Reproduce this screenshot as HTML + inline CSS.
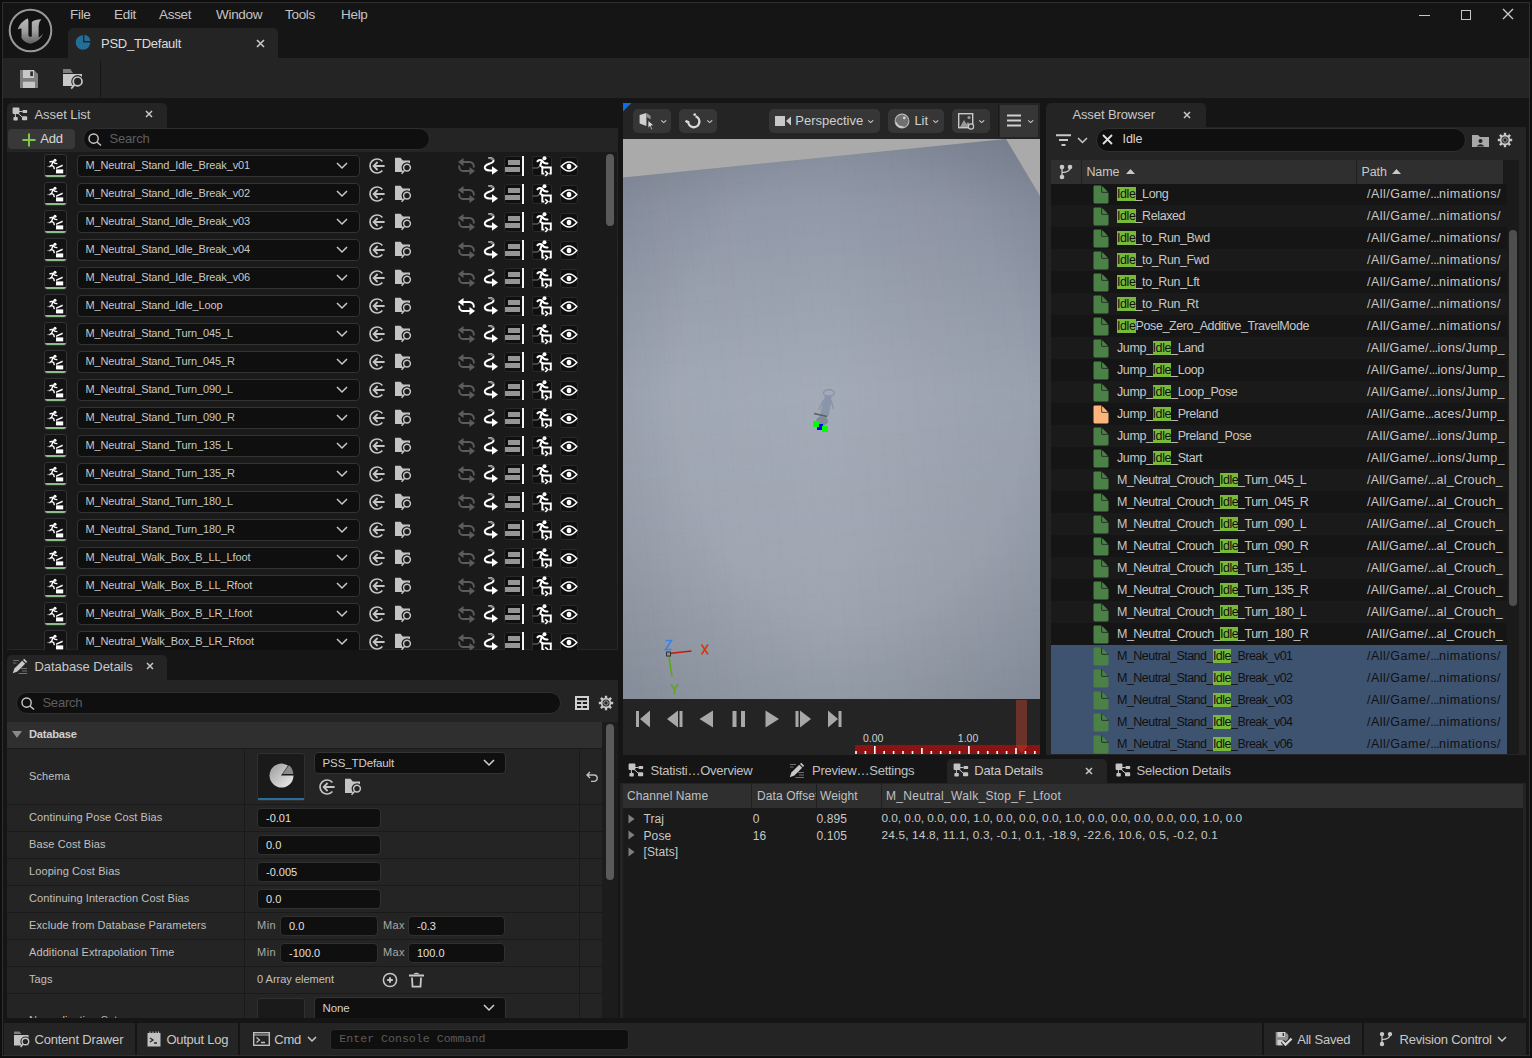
<!DOCTYPE html>
<html><head><meta charset="utf-8"><style>
*{box-sizing:border-box;margin:0;padding:0}
html,body{width:1532px;height:1058px;overflow:hidden;background:#0e0e0e;font-family:"Liberation Sans",sans-serif;color:#c0c0c0}
.a{position:absolute}
.tx{position:absolute;white-space:nowrap;line-height:1}
svg{position:absolute;overflow:visible}
</style></head><body>
<div class="a" style="left:2px;top:2px;width:1528px;height:1054px;background:#151515;border:1px solid #2f2f2f"></div>
<svg style="left:8px;top:8px;" width="46" height="46" viewBox="0 0 46 46"><defs><linearGradient id="ug" x1="0" y1="0" x2="0" y2="1"><stop offset="0" stop-color="#b8b8b8"/><stop offset=".5" stop-color="#a0a0a0"/><stop offset="1" stop-color="#606060"/></linearGradient></defs>
<circle cx="22.5" cy="22.5" r="20.8" fill="#121212" stroke="#999" stroke-width="2"/>
<path d="M9.6 21.5Q12 14 19.8 10.2L20.4 13L20.4 27.5Q21.2 29.5 23.8 28.5L23.8 14Q27 11.5 33.4 11.3Q30.5 14 30.6 18L30.6 29.5Q33 28.5 35.1 25.5Q32.5 33 22.6 35.7Q16 34.5 13.5 30L13.5 20.5Q11 20.5 9.6 21.5Z" fill="url(#ug)"/></svg>
<div class="tx" style="left:70px;top:8.37px;font-size:13.5px;color:#c4c4c4;letter-spacing:-0.3px;font-weight:normal;">File</div>
<div class="tx" style="left:114px;top:8.37px;font-size:13.5px;color:#c4c4c4;letter-spacing:-0.3px;font-weight:normal;">Edit</div>
<div class="tx" style="left:159px;top:8.37px;font-size:13.5px;color:#c4c4c4;letter-spacing:-0.3px;font-weight:normal;">Asset</div>
<div class="tx" style="left:216px;top:8.37px;font-size:13.5px;color:#c4c4c4;letter-spacing:-0.3px;font-weight:normal;">Window</div>
<div class="tx" style="left:285px;top:8.37px;font-size:13.5px;color:#c4c4c4;letter-spacing:-0.3px;font-weight:normal;">Tools</div>
<div class="tx" style="left:341px;top:8.37px;font-size:13.5px;color:#c4c4c4;letter-spacing:-0.3px;font-weight:normal;">Help</div>
<div class="a" style="left:68px;top:28px;width:210px;height:30px;background:#242424;border-radius:5px 5px 0 0"></div>
<svg style="left:75px;top:34px;" width="17" height="17" viewBox="0 0 17 17"><path d="M8 1.2 A7.3 7.3 0 1 0 15.3 8.5 L8 8.5Z" fill="#236e98"/><path d="M9.4 0.8 L9.4 7 L15.4 7 A7 7 0 0 0 9.4 0.8Z" fill="#236e98"/></svg>
<div class="tx" style="left:101px;top:37.30px;font-size:13px;color:#dcdcdc;letter-spacing:-0.25px;font-weight:normal;">PSD_TDefault</div>
<svg style="left:256px;top:39px;" width="9" height="9" viewBox="0 0 9 9"><path d="M1 1L8 8M8 1L1 8" stroke="#c8c8c8" stroke-width="1.6"/></svg>
<div class="a" style="left:1419px;top:15px;width:11px;height:1px;background:#c8c8c8;"></div>
<div class="a" style="left:1461px;top:10px;width:10px;height:10px;background:transparent;border:1px solid #c8c8c8"></div>
<svg style="left:1502px;top:8px;" width="12" height="12" viewBox="0 0 12 12"><path d="M1 1L11 11M11 1L1 11" stroke="#c8c8c8" stroke-width="1.4"/></svg>
<div class="a" style="left:3px;top:58px;width:1526px;height:40px;background:#242424;"></div>
<svg style="left:20px;top:70px;" width="18" height="18" viewBox="0 0 18 18"><path d="M0 0H14L18 4V18H0Z" fill="#7f7f7f"/><rect x="3" y="0" width="11" height="8" fill="#c8c8c8"/><rect x="10.3" y="1.4" width="2.6" height="4.7" fill="#2a2a2a"/><rect x="3" y="11.7" width="12" height="6.3" fill="#c8c8c8"/></svg>
<svg style="left:62px;top:69px;" width="22" height="22" viewBox="0 0 22 22"><path d="M1 0H8.3L11 4H1Z" fill="#7d7d7d"/><path d="M1 5H20V17H1Z" fill="#c8c8c8"/><circle cx="15.6" cy="12.4" r="6.3" fill="#242424"/><circle cx="15.6" cy="12.4" r="4.4" fill="none" stroke="#c8c8c8" stroke-width="1.7"/><path d="M12.6 15.6L9.2 19.6" stroke="#c8c8c8" stroke-width="1.8"/></svg>
<div class="a" style="left:100px;top:60px;width:1px;height:37px;background:#151515;"></div>
<div class="a" style="left:7px;top:103px;width:160px;height:25px;background:#242424;border-radius:5px 5px 0 0"></div>
<svg style="left:12px;top:107px;" width="16" height="15" viewBox="0 0 16 15"><rect x="0.6" y="0.6" width="6.8" height="6.3" rx="1" fill="#c4c4c4"/><rect x="10.5" y="3" width="4.7" height="3" rx=".8" fill="#c4c4c4"/><rect x="1.4" y="10" width="4.4" height="3.5" rx=".8" fill="#c4c4c4"/><rect x="10" y="9.2" width="5.2" height="4" rx=".8" fill="#c4c4c4"/><path d="M7 4.5H10.5M3.4 7V10M6 6.3L10.6 10.4" stroke="#c4c4c4" stroke-width="1"/></svg>
<div class="tx" style="left:34.5px;top:108.20px;font-size:13px;color:#c8c8c8;letter-spacing:-0.05px;font-weight:normal;">Asset List</div>
<svg style="left:145px;top:110px;" width="8" height="8" viewBox="0 0 8 8"><path d="M1 1L7 7M7 1L1 7" stroke="#c8c8c8" stroke-width="1.5"/></svg>
<div class="a" style="left:7px;top:128px;width:611px;height:24px;background:#242424;"></div>
<div class="a" style="left:8px;top:129px;width:67px;height:20px;background:#383838;border-radius:4px"></div>
<svg style="left:22px;top:133px;" width="14" height="14" viewBox="0 0 14 14"><path d="M7 0.5V13.5M0.5 7H13.5" stroke="#7ec84a" stroke-width="2"/></svg>
<div class="tx" style="left:40.3px;top:132.00px;font-size:13px;color:#d8d8d8;letter-spacing:-0.2px;font-weight:normal;">Add</div>
<div class="a" style="left:83px;top:128px;width:347px;height:22px;background:#0f0f0f;border-radius:11px;border:1px solid #2e2e2e"></div>
<svg style="left:88px;top:133px;" width="14" height="13" viewBox="0 0 14 13"><circle cx="5.6" cy="5.6" r="4.6" fill="none" stroke="#c8c8c8" stroke-width="1.4"/><path d="M9 9L13 12.5" stroke="#c8c8c8" stroke-width="1.5"/></svg>
<div class="tx" style="left:109.6px;top:132.00px;font-size:13px;color:#5e5e5e;letter-spacing:-0.2px;font-weight:normal;">Search</div>
<div class="a" style="left:7px;top:152px;width:611px;height:498px;background:#1a1a1a;border-right:1.5px solid #262626;border-bottom:1.5px solid #262626"></div>
<div class="a" style="left:7px;top:152px;width:609px;height:498px;overflow:hidden">
<div class="a" style="left:36.5px;top:2.3000000000000114px;width:23.5px;height:23.3px;background:#131313;border:1px solid #323232;border-radius:3px"></div>
<div class="a" style="left:37.5px;top:22.80000000000001px;width:21.5px;height:2.1px;background:#8cbf8c;border-radius:0 0 2px 2px"></div>
<svg style="left:40px;top:5px" width="17" height="17" viewBox="0 0 17 17"><circle cx="8" cy="3.2" r="1.5" fill="#fff"/><path d="M3 4.8L6.2 4.3L4.6 8.2L6.8 9.8L7.2 11.6M6.2 4.3L7.6 6.2L9.8 6.6M4.6 8.2L2.6 9.6" fill="none" stroke="#fff" stroke-width="1.4" stroke-linecap="round"/><path d="M2.6 9.6H0.3" stroke="#888" stroke-width="1"/><path d="M9 10.4L15.6 7.4V9.2L9 12Z" fill="#fff"/><rect x="9" y="12.4" width="7.2" height="4" fill="#fff"/></svg>
<div class="a" style="left:70px;top:3px;width:283px;height:22px;background:#0f0f0f;border:1px solid #333;border-radius:4px"></div>
<div class="tx" style="left:78.5px;top:7.69px;font-size:11px;color:#c8c8c8;letter-spacing:-0.12px">M_Neutral_Stand_Idle_Break_v01</div>
<svg style="left:329px;top:10px" width="12" height="7" viewBox="0 0 12 7"><path d="M1 1L6 6L11 1" fill="none" stroke="#c8c8c8" stroke-width="1.5"/></svg>
<svg style="left:361.5px;top:6px" width="17" height="17" viewBox="0 0 17 17"><path d="M13.4 3.5A7 7 0 1 0 13.4 12.5" fill="none" stroke="#c4c4c4" stroke-width="1.7"/><path d="M4.6 8H15.6M8.6 4L4.6 8L8.6 12" fill="none" stroke="#c4c4c4" stroke-width="1.8"/></svg>
<svg style="left:387px;top:5px" width="18" height="18" viewBox="0 0 18 18"><path d="M1 0.8H6.5L8.8 3.6H16V15H1Z" fill="#c4c4c4"/><circle cx="13" cy="10.6" r="5.4" fill="#1a1a1a"/><circle cx="13" cy="10.6" r="3.4" fill="none" stroke="#c4c4c4" stroke-width="1.5"/><path d="M10.6 13.3L7.6 16.8" stroke="#c4c4c4" stroke-width="1.5"/></svg>
<svg style="left:450px;top:5px" width="19" height="19" viewBox="0 0 19 19"><path d="M6 5H12.5A4.3 4.3 0 0 1 16.8 9.3V10.5" fill="none" stroke="#5c5c5c" stroke-width="1.9"/><path d="M1 5L6.5 1V9Z" fill="#5c5c5c"/><path d="M13 14H6.5A4.3 4.3 0 0 1 2.2 9.7V8.5" fill="none" stroke="#5c5c5c" stroke-width="1.9"/><path d="M18 14L12.5 10V18Z" fill="#5c5c5c"/></svg>
<svg style="left:476px;top:5px" width="16" height="18" viewBox="0 0 16 18"><path d="M5.5 1C9.5 0.5 12 3 9.5 5.2C7 7.2 1.5 7 1.8 10.8C2.1 13.5 5 13.5 9.5 13.5" fill="none" stroke="#fff" stroke-width="2"/><path d="M5.5 1C8 0.8 10 1.5 10.5 3" fill="none" stroke="#777" stroke-width="1.6"/><path d="M9 9.3L15 13.5L9 17.7Z" fill="#fff"/></svg>
<div class="a" style="left:497px;top:4px;width:19px;height:20px;background:#0f0f0f;border:1px solid #2a2a2a;border-radius:3px"></div>
<div class="a" style="left:501px;top:8px;width:12px;height:4.5px;background:#959595;"></div>
<div class="a" style="left:498px;top:14.5px;width:15px;height:5.5px;background:#959595;"></div>
<div class="a" style="left:515px;top:4px;width:2.2px;height:20px;background:#f4f4f4;"></div>
<div class="a" style="left:525px;top:4px;width:20px;height:20px;background:#0f0f0f;border:1px solid #2a2a2a;border-radius:3px"></div>
<svg style="left:525px;top:4px" width="21" height="20" viewBox="0 0 21 20"><circle cx="12.5" cy="2.3" r="2" fill="#fff"/><path d="M5.5 5.2Q7.5 3.3 10 4.5L8.2 9.5L11 11.5M10 4.5Q12 8 15.5 7.5" fill="none" stroke="#fff" stroke-width="2.1" stroke-linecap="round"/><path d="M8 10L5.5 12H0.5" fill="none" stroke="#777" stroke-width="1.2"/><path d="M12.3 17.6H10.3V11.5H18.8V17.6H17.3" fill="none" stroke="#fff" stroke-width="1.9"/><path d="M13.2 15.2L15.8 17.6L13.2 20" fill="none" stroke="#fff" stroke-width="1.6"/></svg>
<div class="a" style="left:553px;top:5px;width:18px;height:19px;background:#0f0f0f;border:1px solid #2a2a2a;border-radius:3px"></div>
<svg style="left:553px;top:8px" width="18" height="13" viewBox="0 0 18 13"><path d="M1.2 6.5Q9 -2.5 16.8 6.5Q9 15.5 1.2 6.5Z" fill="none" stroke="#fff" stroke-width="1.4"/><ellipse cx="9" cy="6.5" rx="2.3" ry="2.7" fill="#fff"/></svg>
<div class="a" style="left:36.5px;top:30.30000000000001px;width:23.5px;height:23.3px;background:#131313;border:1px solid #323232;border-radius:3px"></div>
<div class="a" style="left:37.5px;top:50.80000000000001px;width:21.5px;height:2.1px;background:#8cbf8c;border-radius:0 0 2px 2px"></div>
<svg style="left:40px;top:33px" width="17" height="17" viewBox="0 0 17 17"><circle cx="8" cy="3.2" r="1.5" fill="#fff"/><path d="M3 4.8L6.2 4.3L4.6 8.2L6.8 9.8L7.2 11.6M6.2 4.3L7.6 6.2L9.8 6.6M4.6 8.2L2.6 9.6" fill="none" stroke="#fff" stroke-width="1.4" stroke-linecap="round"/><path d="M2.6 9.6H0.3" stroke="#888" stroke-width="1"/><path d="M9 10.4L15.6 7.4V9.2L9 12Z" fill="#fff"/><rect x="9" y="12.4" width="7.2" height="4" fill="#fff"/></svg>
<div class="a" style="left:70px;top:31px;width:283px;height:22px;background:#0f0f0f;border:1px solid #333;border-radius:4px"></div>
<div class="tx" style="left:78.5px;top:35.69px;font-size:11px;color:#c8c8c8;letter-spacing:-0.12px">M_Neutral_Stand_Idle_Break_v02</div>
<svg style="left:329px;top:38px" width="12" height="7" viewBox="0 0 12 7"><path d="M1 1L6 6L11 1" fill="none" stroke="#c8c8c8" stroke-width="1.5"/></svg>
<svg style="left:361.5px;top:34px" width="17" height="17" viewBox="0 0 17 17"><path d="M13.4 3.5A7 7 0 1 0 13.4 12.5" fill="none" stroke="#c4c4c4" stroke-width="1.7"/><path d="M4.6 8H15.6M8.6 4L4.6 8L8.6 12" fill="none" stroke="#c4c4c4" stroke-width="1.8"/></svg>
<svg style="left:387px;top:33px" width="18" height="18" viewBox="0 0 18 18"><path d="M1 0.8H6.5L8.8 3.6H16V15H1Z" fill="#c4c4c4"/><circle cx="13" cy="10.6" r="5.4" fill="#1a1a1a"/><circle cx="13" cy="10.6" r="3.4" fill="none" stroke="#c4c4c4" stroke-width="1.5"/><path d="M10.6 13.3L7.6 16.8" stroke="#c4c4c4" stroke-width="1.5"/></svg>
<svg style="left:450px;top:33px" width="19" height="19" viewBox="0 0 19 19"><path d="M6 5H12.5A4.3 4.3 0 0 1 16.8 9.3V10.5" fill="none" stroke="#5c5c5c" stroke-width="1.9"/><path d="M1 5L6.5 1V9Z" fill="#5c5c5c"/><path d="M13 14H6.5A4.3 4.3 0 0 1 2.2 9.7V8.5" fill="none" stroke="#5c5c5c" stroke-width="1.9"/><path d="M18 14L12.5 10V18Z" fill="#5c5c5c"/></svg>
<svg style="left:476px;top:33px" width="16" height="18" viewBox="0 0 16 18"><path d="M5.5 1C9.5 0.5 12 3 9.5 5.2C7 7.2 1.5 7 1.8 10.8C2.1 13.5 5 13.5 9.5 13.5" fill="none" stroke="#fff" stroke-width="2"/><path d="M5.5 1C8 0.8 10 1.5 10.5 3" fill="none" stroke="#777" stroke-width="1.6"/><path d="M9 9.3L15 13.5L9 17.7Z" fill="#fff"/></svg>
<div class="a" style="left:497px;top:32px;width:19px;height:20px;background:#0f0f0f;border:1px solid #2a2a2a;border-radius:3px"></div>
<div class="a" style="left:501px;top:36px;width:12px;height:4.5px;background:#959595;"></div>
<div class="a" style="left:498px;top:42.5px;width:15px;height:5.5px;background:#959595;"></div>
<div class="a" style="left:515px;top:32px;width:2.2px;height:20px;background:#f4f4f4;"></div>
<div class="a" style="left:525px;top:32px;width:20px;height:20px;background:#0f0f0f;border:1px solid #2a2a2a;border-radius:3px"></div>
<svg style="left:525px;top:32px" width="21" height="20" viewBox="0 0 21 20"><circle cx="12.5" cy="2.3" r="2" fill="#fff"/><path d="M5.5 5.2Q7.5 3.3 10 4.5L8.2 9.5L11 11.5M10 4.5Q12 8 15.5 7.5" fill="none" stroke="#fff" stroke-width="2.1" stroke-linecap="round"/><path d="M8 10L5.5 12H0.5" fill="none" stroke="#777" stroke-width="1.2"/><path d="M12.3 17.6H10.3V11.5H18.8V17.6H17.3" fill="none" stroke="#fff" stroke-width="1.9"/><path d="M13.2 15.2L15.8 17.6L13.2 20" fill="none" stroke="#fff" stroke-width="1.6"/></svg>
<div class="a" style="left:553px;top:33px;width:18px;height:19px;background:#0f0f0f;border:1px solid #2a2a2a;border-radius:3px"></div>
<svg style="left:553px;top:36px" width="18" height="13" viewBox="0 0 18 13"><path d="M1.2 6.5Q9 -2.5 16.8 6.5Q9 15.5 1.2 6.5Z" fill="none" stroke="#fff" stroke-width="1.4"/><ellipse cx="9" cy="6.5" rx="2.3" ry="2.7" fill="#fff"/></svg>
<div class="a" style="left:36.5px;top:58.30000000000001px;width:23.5px;height:23.3px;background:#131313;border:1px solid #323232;border-radius:3px"></div>
<div class="a" style="left:37.5px;top:78.80000000000001px;width:21.5px;height:2.1px;background:#8cbf8c;border-radius:0 0 2px 2px"></div>
<svg style="left:40px;top:61px" width="17" height="17" viewBox="0 0 17 17"><circle cx="8" cy="3.2" r="1.5" fill="#fff"/><path d="M3 4.8L6.2 4.3L4.6 8.2L6.8 9.8L7.2 11.6M6.2 4.3L7.6 6.2L9.8 6.6M4.6 8.2L2.6 9.6" fill="none" stroke="#fff" stroke-width="1.4" stroke-linecap="round"/><path d="M2.6 9.6H0.3" stroke="#888" stroke-width="1"/><path d="M9 10.4L15.6 7.4V9.2L9 12Z" fill="#fff"/><rect x="9" y="12.4" width="7.2" height="4" fill="#fff"/></svg>
<div class="a" style="left:70px;top:59px;width:283px;height:22px;background:#0f0f0f;border:1px solid #333;border-radius:4px"></div>
<div class="tx" style="left:78.5px;top:63.69px;font-size:11px;color:#c8c8c8;letter-spacing:-0.12px">M_Neutral_Stand_Idle_Break_v03</div>
<svg style="left:329px;top:66px" width="12" height="7" viewBox="0 0 12 7"><path d="M1 1L6 6L11 1" fill="none" stroke="#c8c8c8" stroke-width="1.5"/></svg>
<svg style="left:361.5px;top:62px" width="17" height="17" viewBox="0 0 17 17"><path d="M13.4 3.5A7 7 0 1 0 13.4 12.5" fill="none" stroke="#c4c4c4" stroke-width="1.7"/><path d="M4.6 8H15.6M8.6 4L4.6 8L8.6 12" fill="none" stroke="#c4c4c4" stroke-width="1.8"/></svg>
<svg style="left:387px;top:61px" width="18" height="18" viewBox="0 0 18 18"><path d="M1 0.8H6.5L8.8 3.6H16V15H1Z" fill="#c4c4c4"/><circle cx="13" cy="10.6" r="5.4" fill="#1a1a1a"/><circle cx="13" cy="10.6" r="3.4" fill="none" stroke="#c4c4c4" stroke-width="1.5"/><path d="M10.6 13.3L7.6 16.8" stroke="#c4c4c4" stroke-width="1.5"/></svg>
<svg style="left:450px;top:61px" width="19" height="19" viewBox="0 0 19 19"><path d="M6 5H12.5A4.3 4.3 0 0 1 16.8 9.3V10.5" fill="none" stroke="#5c5c5c" stroke-width="1.9"/><path d="M1 5L6.5 1V9Z" fill="#5c5c5c"/><path d="M13 14H6.5A4.3 4.3 0 0 1 2.2 9.7V8.5" fill="none" stroke="#5c5c5c" stroke-width="1.9"/><path d="M18 14L12.5 10V18Z" fill="#5c5c5c"/></svg>
<svg style="left:476px;top:61px" width="16" height="18" viewBox="0 0 16 18"><path d="M5.5 1C9.5 0.5 12 3 9.5 5.2C7 7.2 1.5 7 1.8 10.8C2.1 13.5 5 13.5 9.5 13.5" fill="none" stroke="#fff" stroke-width="2"/><path d="M5.5 1C8 0.8 10 1.5 10.5 3" fill="none" stroke="#777" stroke-width="1.6"/><path d="M9 9.3L15 13.5L9 17.7Z" fill="#fff"/></svg>
<div class="a" style="left:497px;top:60px;width:19px;height:20px;background:#0f0f0f;border:1px solid #2a2a2a;border-radius:3px"></div>
<div class="a" style="left:501px;top:64px;width:12px;height:4.5px;background:#959595;"></div>
<div class="a" style="left:498px;top:70.5px;width:15px;height:5.5px;background:#959595;"></div>
<div class="a" style="left:515px;top:60px;width:2.2px;height:20px;background:#f4f4f4;"></div>
<div class="a" style="left:525px;top:60px;width:20px;height:20px;background:#0f0f0f;border:1px solid #2a2a2a;border-radius:3px"></div>
<svg style="left:525px;top:60px" width="21" height="20" viewBox="0 0 21 20"><circle cx="12.5" cy="2.3" r="2" fill="#fff"/><path d="M5.5 5.2Q7.5 3.3 10 4.5L8.2 9.5L11 11.5M10 4.5Q12 8 15.5 7.5" fill="none" stroke="#fff" stroke-width="2.1" stroke-linecap="round"/><path d="M8 10L5.5 12H0.5" fill="none" stroke="#777" stroke-width="1.2"/><path d="M12.3 17.6H10.3V11.5H18.8V17.6H17.3" fill="none" stroke="#fff" stroke-width="1.9"/><path d="M13.2 15.2L15.8 17.6L13.2 20" fill="none" stroke="#fff" stroke-width="1.6"/></svg>
<div class="a" style="left:553px;top:61px;width:18px;height:19px;background:#0f0f0f;border:1px solid #2a2a2a;border-radius:3px"></div>
<svg style="left:553px;top:64px" width="18" height="13" viewBox="0 0 18 13"><path d="M1.2 6.5Q9 -2.5 16.8 6.5Q9 15.5 1.2 6.5Z" fill="none" stroke="#fff" stroke-width="1.4"/><ellipse cx="9" cy="6.5" rx="2.3" ry="2.7" fill="#fff"/></svg>
<div class="a" style="left:36.5px;top:86.30000000000001px;width:23.5px;height:23.3px;background:#131313;border:1px solid #323232;border-radius:3px"></div>
<div class="a" style="left:37.5px;top:106.80000000000001px;width:21.5px;height:2.1px;background:#8cbf8c;border-radius:0 0 2px 2px"></div>
<svg style="left:40px;top:89px" width="17" height="17" viewBox="0 0 17 17"><circle cx="8" cy="3.2" r="1.5" fill="#fff"/><path d="M3 4.8L6.2 4.3L4.6 8.2L6.8 9.8L7.2 11.6M6.2 4.3L7.6 6.2L9.8 6.6M4.6 8.2L2.6 9.6" fill="none" stroke="#fff" stroke-width="1.4" stroke-linecap="round"/><path d="M2.6 9.6H0.3" stroke="#888" stroke-width="1"/><path d="M9 10.4L15.6 7.4V9.2L9 12Z" fill="#fff"/><rect x="9" y="12.4" width="7.2" height="4" fill="#fff"/></svg>
<div class="a" style="left:70px;top:87px;width:283px;height:22px;background:#0f0f0f;border:1px solid #333;border-radius:4px"></div>
<div class="tx" style="left:78.5px;top:91.69px;font-size:11px;color:#c8c8c8;letter-spacing:-0.12px">M_Neutral_Stand_Idle_Break_v04</div>
<svg style="left:329px;top:94px" width="12" height="7" viewBox="0 0 12 7"><path d="M1 1L6 6L11 1" fill="none" stroke="#c8c8c8" stroke-width="1.5"/></svg>
<svg style="left:361.5px;top:90px" width="17" height="17" viewBox="0 0 17 17"><path d="M13.4 3.5A7 7 0 1 0 13.4 12.5" fill="none" stroke="#c4c4c4" stroke-width="1.7"/><path d="M4.6 8H15.6M8.6 4L4.6 8L8.6 12" fill="none" stroke="#c4c4c4" stroke-width="1.8"/></svg>
<svg style="left:387px;top:89px" width="18" height="18" viewBox="0 0 18 18"><path d="M1 0.8H6.5L8.8 3.6H16V15H1Z" fill="#c4c4c4"/><circle cx="13" cy="10.6" r="5.4" fill="#1a1a1a"/><circle cx="13" cy="10.6" r="3.4" fill="none" stroke="#c4c4c4" stroke-width="1.5"/><path d="M10.6 13.3L7.6 16.8" stroke="#c4c4c4" stroke-width="1.5"/></svg>
<svg style="left:450px;top:89px" width="19" height="19" viewBox="0 0 19 19"><path d="M6 5H12.5A4.3 4.3 0 0 1 16.8 9.3V10.5" fill="none" stroke="#5c5c5c" stroke-width="1.9"/><path d="M1 5L6.5 1V9Z" fill="#5c5c5c"/><path d="M13 14H6.5A4.3 4.3 0 0 1 2.2 9.7V8.5" fill="none" stroke="#5c5c5c" stroke-width="1.9"/><path d="M18 14L12.5 10V18Z" fill="#5c5c5c"/></svg>
<svg style="left:476px;top:89px" width="16" height="18" viewBox="0 0 16 18"><path d="M5.5 1C9.5 0.5 12 3 9.5 5.2C7 7.2 1.5 7 1.8 10.8C2.1 13.5 5 13.5 9.5 13.5" fill="none" stroke="#fff" stroke-width="2"/><path d="M5.5 1C8 0.8 10 1.5 10.5 3" fill="none" stroke="#777" stroke-width="1.6"/><path d="M9 9.3L15 13.5L9 17.7Z" fill="#fff"/></svg>
<div class="a" style="left:497px;top:88px;width:19px;height:20px;background:#0f0f0f;border:1px solid #2a2a2a;border-radius:3px"></div>
<div class="a" style="left:501px;top:92px;width:12px;height:4.5px;background:#959595;"></div>
<div class="a" style="left:498px;top:98.5px;width:15px;height:5.5px;background:#959595;"></div>
<div class="a" style="left:515px;top:88px;width:2.2px;height:20px;background:#f4f4f4;"></div>
<div class="a" style="left:525px;top:88px;width:20px;height:20px;background:#0f0f0f;border:1px solid #2a2a2a;border-radius:3px"></div>
<svg style="left:525px;top:88px" width="21" height="20" viewBox="0 0 21 20"><circle cx="12.5" cy="2.3" r="2" fill="#fff"/><path d="M5.5 5.2Q7.5 3.3 10 4.5L8.2 9.5L11 11.5M10 4.5Q12 8 15.5 7.5" fill="none" stroke="#fff" stroke-width="2.1" stroke-linecap="round"/><path d="M8 10L5.5 12H0.5" fill="none" stroke="#777" stroke-width="1.2"/><path d="M12.3 17.6H10.3V11.5H18.8V17.6H17.3" fill="none" stroke="#fff" stroke-width="1.9"/><path d="M13.2 15.2L15.8 17.6L13.2 20" fill="none" stroke="#fff" stroke-width="1.6"/></svg>
<div class="a" style="left:553px;top:89px;width:18px;height:19px;background:#0f0f0f;border:1px solid #2a2a2a;border-radius:3px"></div>
<svg style="left:553px;top:92px" width="18" height="13" viewBox="0 0 18 13"><path d="M1.2 6.5Q9 -2.5 16.8 6.5Q9 15.5 1.2 6.5Z" fill="none" stroke="#fff" stroke-width="1.4"/><ellipse cx="9" cy="6.5" rx="2.3" ry="2.7" fill="#fff"/></svg>
<div class="a" style="left:36.5px;top:114.30000000000001px;width:23.5px;height:23.3px;background:#131313;border:1px solid #323232;border-radius:3px"></div>
<div class="a" style="left:37.5px;top:134.8px;width:21.5px;height:2.1px;background:#8cbf8c;border-radius:0 0 2px 2px"></div>
<svg style="left:40px;top:117px" width="17" height="17" viewBox="0 0 17 17"><circle cx="8" cy="3.2" r="1.5" fill="#fff"/><path d="M3 4.8L6.2 4.3L4.6 8.2L6.8 9.8L7.2 11.6M6.2 4.3L7.6 6.2L9.8 6.6M4.6 8.2L2.6 9.6" fill="none" stroke="#fff" stroke-width="1.4" stroke-linecap="round"/><path d="M2.6 9.6H0.3" stroke="#888" stroke-width="1"/><path d="M9 10.4L15.6 7.4V9.2L9 12Z" fill="#fff"/><rect x="9" y="12.4" width="7.2" height="4" fill="#fff"/></svg>
<div class="a" style="left:70px;top:115px;width:283px;height:22px;background:#0f0f0f;border:1px solid #333;border-radius:4px"></div>
<div class="tx" style="left:78.5px;top:119.69px;font-size:11px;color:#c8c8c8;letter-spacing:-0.12px">M_Neutral_Stand_Idle_Break_v06</div>
<svg style="left:329px;top:122px" width="12" height="7" viewBox="0 0 12 7"><path d="M1 1L6 6L11 1" fill="none" stroke="#c8c8c8" stroke-width="1.5"/></svg>
<svg style="left:361.5px;top:118px" width="17" height="17" viewBox="0 0 17 17"><path d="M13.4 3.5A7 7 0 1 0 13.4 12.5" fill="none" stroke="#c4c4c4" stroke-width="1.7"/><path d="M4.6 8H15.6M8.6 4L4.6 8L8.6 12" fill="none" stroke="#c4c4c4" stroke-width="1.8"/></svg>
<svg style="left:387px;top:117px" width="18" height="18" viewBox="0 0 18 18"><path d="M1 0.8H6.5L8.8 3.6H16V15H1Z" fill="#c4c4c4"/><circle cx="13" cy="10.6" r="5.4" fill="#1a1a1a"/><circle cx="13" cy="10.6" r="3.4" fill="none" stroke="#c4c4c4" stroke-width="1.5"/><path d="M10.6 13.3L7.6 16.8" stroke="#c4c4c4" stroke-width="1.5"/></svg>
<svg style="left:450px;top:117px" width="19" height="19" viewBox="0 0 19 19"><path d="M6 5H12.5A4.3 4.3 0 0 1 16.8 9.3V10.5" fill="none" stroke="#5c5c5c" stroke-width="1.9"/><path d="M1 5L6.5 1V9Z" fill="#5c5c5c"/><path d="M13 14H6.5A4.3 4.3 0 0 1 2.2 9.7V8.5" fill="none" stroke="#5c5c5c" stroke-width="1.9"/><path d="M18 14L12.5 10V18Z" fill="#5c5c5c"/></svg>
<svg style="left:476px;top:117px" width="16" height="18" viewBox="0 0 16 18"><path d="M5.5 1C9.5 0.5 12 3 9.5 5.2C7 7.2 1.5 7 1.8 10.8C2.1 13.5 5 13.5 9.5 13.5" fill="none" stroke="#fff" stroke-width="2"/><path d="M5.5 1C8 0.8 10 1.5 10.5 3" fill="none" stroke="#777" stroke-width="1.6"/><path d="M9 9.3L15 13.5L9 17.7Z" fill="#fff"/></svg>
<div class="a" style="left:497px;top:116px;width:19px;height:20px;background:#0f0f0f;border:1px solid #2a2a2a;border-radius:3px"></div>
<div class="a" style="left:501px;top:120px;width:12px;height:4.5px;background:#959595;"></div>
<div class="a" style="left:498px;top:126.5px;width:15px;height:5.5px;background:#959595;"></div>
<div class="a" style="left:515px;top:116px;width:2.2px;height:20px;background:#f4f4f4;"></div>
<div class="a" style="left:525px;top:116px;width:20px;height:20px;background:#0f0f0f;border:1px solid #2a2a2a;border-radius:3px"></div>
<svg style="left:525px;top:116px" width="21" height="20" viewBox="0 0 21 20"><circle cx="12.5" cy="2.3" r="2" fill="#fff"/><path d="M5.5 5.2Q7.5 3.3 10 4.5L8.2 9.5L11 11.5M10 4.5Q12 8 15.5 7.5" fill="none" stroke="#fff" stroke-width="2.1" stroke-linecap="round"/><path d="M8 10L5.5 12H0.5" fill="none" stroke="#777" stroke-width="1.2"/><path d="M12.3 17.6H10.3V11.5H18.8V17.6H17.3" fill="none" stroke="#fff" stroke-width="1.9"/><path d="M13.2 15.2L15.8 17.6L13.2 20" fill="none" stroke="#fff" stroke-width="1.6"/></svg>
<div class="a" style="left:553px;top:117px;width:18px;height:19px;background:#0f0f0f;border:1px solid #2a2a2a;border-radius:3px"></div>
<svg style="left:553px;top:120px" width="18" height="13" viewBox="0 0 18 13"><path d="M1.2 6.5Q9 -2.5 16.8 6.5Q9 15.5 1.2 6.5Z" fill="none" stroke="#fff" stroke-width="1.4"/><ellipse cx="9" cy="6.5" rx="2.3" ry="2.7" fill="#fff"/></svg>
<div class="a" style="left:36.5px;top:142.3px;width:23.5px;height:23.3px;background:#131313;border:1px solid #323232;border-radius:3px"></div>
<div class="a" style="left:37.5px;top:162.8px;width:21.5px;height:2.1px;background:#8cbf8c;border-radius:0 0 2px 2px"></div>
<svg style="left:40px;top:145px" width="17" height="17" viewBox="0 0 17 17"><circle cx="8" cy="3.2" r="1.5" fill="#fff"/><path d="M3 4.8L6.2 4.3L4.6 8.2L6.8 9.8L7.2 11.6M6.2 4.3L7.6 6.2L9.8 6.6M4.6 8.2L2.6 9.6" fill="none" stroke="#fff" stroke-width="1.4" stroke-linecap="round"/><path d="M2.6 9.6H0.3" stroke="#888" stroke-width="1"/><path d="M9 10.4L15.6 7.4V9.2L9 12Z" fill="#fff"/><rect x="9" y="12.4" width="7.2" height="4" fill="#fff"/></svg>
<div class="a" style="left:70px;top:143px;width:283px;height:22px;background:#0f0f0f;border:1px solid #333;border-radius:4px"></div>
<div class="tx" style="left:78.5px;top:147.69px;font-size:11px;color:#c8c8c8;letter-spacing:-0.12px">M_Neutral_Stand_Idle_Loop</div>
<svg style="left:329px;top:150px" width="12" height="7" viewBox="0 0 12 7"><path d="M1 1L6 6L11 1" fill="none" stroke="#c8c8c8" stroke-width="1.5"/></svg>
<svg style="left:361.5px;top:146px" width="17" height="17" viewBox="0 0 17 17"><path d="M13.4 3.5A7 7 0 1 0 13.4 12.5" fill="none" stroke="#c4c4c4" stroke-width="1.7"/><path d="M4.6 8H15.6M8.6 4L4.6 8L8.6 12" fill="none" stroke="#c4c4c4" stroke-width="1.8"/></svg>
<svg style="left:387px;top:145px" width="18" height="18" viewBox="0 0 18 18"><path d="M1 0.8H6.5L8.8 3.6H16V15H1Z" fill="#c4c4c4"/><circle cx="13" cy="10.6" r="5.4" fill="#1a1a1a"/><circle cx="13" cy="10.6" r="3.4" fill="none" stroke="#c4c4c4" stroke-width="1.5"/><path d="M10.6 13.3L7.6 16.8" stroke="#c4c4c4" stroke-width="1.5"/></svg>
<svg style="left:450px;top:145px" width="19" height="19" viewBox="0 0 19 19"><path d="M6 5H12.5A4.3 4.3 0 0 1 16.8 9.3V10.5" fill="none" stroke="#ffffff" stroke-width="1.9"/><path d="M1 5L6.5 1V9Z" fill="#ffffff"/><path d="M13 14H6.5A4.3 4.3 0 0 1 2.2 9.7V8.5" fill="none" stroke="#ffffff" stroke-width="1.9"/><path d="M18 14L12.5 10V18Z" fill="#ffffff"/></svg>
<svg style="left:476px;top:145px" width="16" height="18" viewBox="0 0 16 18"><path d="M5.5 1C9.5 0.5 12 3 9.5 5.2C7 7.2 1.5 7 1.8 10.8C2.1 13.5 5 13.5 9.5 13.5" fill="none" stroke="#fff" stroke-width="2"/><path d="M5.5 1C8 0.8 10 1.5 10.5 3" fill="none" stroke="#777" stroke-width="1.6"/><path d="M9 9.3L15 13.5L9 17.7Z" fill="#fff"/></svg>
<div class="a" style="left:497px;top:144px;width:19px;height:20px;background:#0f0f0f;border:1px solid #2a2a2a;border-radius:3px"></div>
<div class="a" style="left:501px;top:148px;width:12px;height:4.5px;background:#959595;"></div>
<div class="a" style="left:498px;top:154.5px;width:15px;height:5.5px;background:#959595;"></div>
<div class="a" style="left:515px;top:144px;width:2.2px;height:20px;background:#f4f4f4;"></div>
<div class="a" style="left:525px;top:144px;width:20px;height:20px;background:#0f0f0f;border:1px solid #2a2a2a;border-radius:3px"></div>
<svg style="left:525px;top:144px" width="21" height="20" viewBox="0 0 21 20"><circle cx="12.5" cy="2.3" r="2" fill="#fff"/><path d="M5.5 5.2Q7.5 3.3 10 4.5L8.2 9.5L11 11.5M10 4.5Q12 8 15.5 7.5" fill="none" stroke="#fff" stroke-width="2.1" stroke-linecap="round"/><path d="M8 10L5.5 12H0.5" fill="none" stroke="#777" stroke-width="1.2"/><path d="M12.3 17.6H10.3V11.5H18.8V17.6H17.3" fill="none" stroke="#fff" stroke-width="1.9"/><path d="M13.2 15.2L15.8 17.6L13.2 20" fill="none" stroke="#fff" stroke-width="1.6"/></svg>
<div class="a" style="left:553px;top:145px;width:18px;height:19px;background:#0f0f0f;border:1px solid #2a2a2a;border-radius:3px"></div>
<svg style="left:553px;top:148px" width="18" height="13" viewBox="0 0 18 13"><path d="M1.2 6.5Q9 -2.5 16.8 6.5Q9 15.5 1.2 6.5Z" fill="none" stroke="#fff" stroke-width="1.4"/><ellipse cx="9" cy="6.5" rx="2.3" ry="2.7" fill="#fff"/></svg>
<div class="a" style="left:36.5px;top:170.3px;width:23.5px;height:23.3px;background:#131313;border:1px solid #323232;border-radius:3px"></div>
<div class="a" style="left:37.5px;top:190.8px;width:21.5px;height:2.1px;background:#8cbf8c;border-radius:0 0 2px 2px"></div>
<svg style="left:40px;top:173px" width="17" height="17" viewBox="0 0 17 17"><circle cx="8" cy="3.2" r="1.5" fill="#fff"/><path d="M3 4.8L6.2 4.3L4.6 8.2L6.8 9.8L7.2 11.6M6.2 4.3L7.6 6.2L9.8 6.6M4.6 8.2L2.6 9.6" fill="none" stroke="#fff" stroke-width="1.4" stroke-linecap="round"/><path d="M2.6 9.6H0.3" stroke="#888" stroke-width="1"/><path d="M9 10.4L15.6 7.4V9.2L9 12Z" fill="#fff"/><rect x="9" y="12.4" width="7.2" height="4" fill="#fff"/></svg>
<div class="a" style="left:70px;top:171px;width:283px;height:22px;background:#0f0f0f;border:1px solid #333;border-radius:4px"></div>
<div class="tx" style="left:78.5px;top:175.69px;font-size:11px;color:#c8c8c8;letter-spacing:-0.12px">M_Neutral_Stand_Turn_045_L</div>
<svg style="left:329px;top:178px" width="12" height="7" viewBox="0 0 12 7"><path d="M1 1L6 6L11 1" fill="none" stroke="#c8c8c8" stroke-width="1.5"/></svg>
<svg style="left:361.5px;top:174px" width="17" height="17" viewBox="0 0 17 17"><path d="M13.4 3.5A7 7 0 1 0 13.4 12.5" fill="none" stroke="#c4c4c4" stroke-width="1.7"/><path d="M4.6 8H15.6M8.6 4L4.6 8L8.6 12" fill="none" stroke="#c4c4c4" stroke-width="1.8"/></svg>
<svg style="left:387px;top:173px" width="18" height="18" viewBox="0 0 18 18"><path d="M1 0.8H6.5L8.8 3.6H16V15H1Z" fill="#c4c4c4"/><circle cx="13" cy="10.6" r="5.4" fill="#1a1a1a"/><circle cx="13" cy="10.6" r="3.4" fill="none" stroke="#c4c4c4" stroke-width="1.5"/><path d="M10.6 13.3L7.6 16.8" stroke="#c4c4c4" stroke-width="1.5"/></svg>
<svg style="left:450px;top:173px" width="19" height="19" viewBox="0 0 19 19"><path d="M6 5H12.5A4.3 4.3 0 0 1 16.8 9.3V10.5" fill="none" stroke="#5c5c5c" stroke-width="1.9"/><path d="M1 5L6.5 1V9Z" fill="#5c5c5c"/><path d="M13 14H6.5A4.3 4.3 0 0 1 2.2 9.7V8.5" fill="none" stroke="#5c5c5c" stroke-width="1.9"/><path d="M18 14L12.5 10V18Z" fill="#5c5c5c"/></svg>
<svg style="left:476px;top:173px" width="16" height="18" viewBox="0 0 16 18"><path d="M5.5 1C9.5 0.5 12 3 9.5 5.2C7 7.2 1.5 7 1.8 10.8C2.1 13.5 5 13.5 9.5 13.5" fill="none" stroke="#fff" stroke-width="2"/><path d="M5.5 1C8 0.8 10 1.5 10.5 3" fill="none" stroke="#777" stroke-width="1.6"/><path d="M9 9.3L15 13.5L9 17.7Z" fill="#fff"/></svg>
<div class="a" style="left:497px;top:172px;width:19px;height:20px;background:#0f0f0f;border:1px solid #2a2a2a;border-radius:3px"></div>
<div class="a" style="left:501px;top:176px;width:12px;height:4.5px;background:#959595;"></div>
<div class="a" style="left:498px;top:182.5px;width:15px;height:5.5px;background:#959595;"></div>
<div class="a" style="left:515px;top:172px;width:2.2px;height:20px;background:#f4f4f4;"></div>
<div class="a" style="left:525px;top:172px;width:20px;height:20px;background:#0f0f0f;border:1px solid #2a2a2a;border-radius:3px"></div>
<svg style="left:525px;top:172px" width="21" height="20" viewBox="0 0 21 20"><circle cx="12.5" cy="2.3" r="2" fill="#fff"/><path d="M5.5 5.2Q7.5 3.3 10 4.5L8.2 9.5L11 11.5M10 4.5Q12 8 15.5 7.5" fill="none" stroke="#fff" stroke-width="2.1" stroke-linecap="round"/><path d="M8 10L5.5 12H0.5" fill="none" stroke="#777" stroke-width="1.2"/><path d="M12.3 17.6H10.3V11.5H18.8V17.6H17.3" fill="none" stroke="#fff" stroke-width="1.9"/><path d="M13.2 15.2L15.8 17.6L13.2 20" fill="none" stroke="#fff" stroke-width="1.6"/></svg>
<div class="a" style="left:553px;top:173px;width:18px;height:19px;background:#0f0f0f;border:1px solid #2a2a2a;border-radius:3px"></div>
<svg style="left:553px;top:176px" width="18" height="13" viewBox="0 0 18 13"><path d="M1.2 6.5Q9 -2.5 16.8 6.5Q9 15.5 1.2 6.5Z" fill="none" stroke="#fff" stroke-width="1.4"/><ellipse cx="9" cy="6.5" rx="2.3" ry="2.7" fill="#fff"/></svg>
<div class="a" style="left:36.5px;top:198.3px;width:23.5px;height:23.3px;background:#131313;border:1px solid #323232;border-radius:3px"></div>
<div class="a" style="left:37.5px;top:218.8px;width:21.5px;height:2.1px;background:#8cbf8c;border-radius:0 0 2px 2px"></div>
<svg style="left:40px;top:201px" width="17" height="17" viewBox="0 0 17 17"><circle cx="8" cy="3.2" r="1.5" fill="#fff"/><path d="M3 4.8L6.2 4.3L4.6 8.2L6.8 9.8L7.2 11.6M6.2 4.3L7.6 6.2L9.8 6.6M4.6 8.2L2.6 9.6" fill="none" stroke="#fff" stroke-width="1.4" stroke-linecap="round"/><path d="M2.6 9.6H0.3" stroke="#888" stroke-width="1"/><path d="M9 10.4L15.6 7.4V9.2L9 12Z" fill="#fff"/><rect x="9" y="12.4" width="7.2" height="4" fill="#fff"/></svg>
<div class="a" style="left:70px;top:199px;width:283px;height:22px;background:#0f0f0f;border:1px solid #333;border-radius:4px"></div>
<div class="tx" style="left:78.5px;top:203.69px;font-size:11px;color:#c8c8c8;letter-spacing:-0.12px">M_Neutral_Stand_Turn_045_R</div>
<svg style="left:329px;top:206px" width="12" height="7" viewBox="0 0 12 7"><path d="M1 1L6 6L11 1" fill="none" stroke="#c8c8c8" stroke-width="1.5"/></svg>
<svg style="left:361.5px;top:202px" width="17" height="17" viewBox="0 0 17 17"><path d="M13.4 3.5A7 7 0 1 0 13.4 12.5" fill="none" stroke="#c4c4c4" stroke-width="1.7"/><path d="M4.6 8H15.6M8.6 4L4.6 8L8.6 12" fill="none" stroke="#c4c4c4" stroke-width="1.8"/></svg>
<svg style="left:387px;top:201px" width="18" height="18" viewBox="0 0 18 18"><path d="M1 0.8H6.5L8.8 3.6H16V15H1Z" fill="#c4c4c4"/><circle cx="13" cy="10.6" r="5.4" fill="#1a1a1a"/><circle cx="13" cy="10.6" r="3.4" fill="none" stroke="#c4c4c4" stroke-width="1.5"/><path d="M10.6 13.3L7.6 16.8" stroke="#c4c4c4" stroke-width="1.5"/></svg>
<svg style="left:450px;top:201px" width="19" height="19" viewBox="0 0 19 19"><path d="M6 5H12.5A4.3 4.3 0 0 1 16.8 9.3V10.5" fill="none" stroke="#5c5c5c" stroke-width="1.9"/><path d="M1 5L6.5 1V9Z" fill="#5c5c5c"/><path d="M13 14H6.5A4.3 4.3 0 0 1 2.2 9.7V8.5" fill="none" stroke="#5c5c5c" stroke-width="1.9"/><path d="M18 14L12.5 10V18Z" fill="#5c5c5c"/></svg>
<svg style="left:476px;top:201px" width="16" height="18" viewBox="0 0 16 18"><path d="M5.5 1C9.5 0.5 12 3 9.5 5.2C7 7.2 1.5 7 1.8 10.8C2.1 13.5 5 13.5 9.5 13.5" fill="none" stroke="#fff" stroke-width="2"/><path d="M5.5 1C8 0.8 10 1.5 10.5 3" fill="none" stroke="#777" stroke-width="1.6"/><path d="M9 9.3L15 13.5L9 17.7Z" fill="#fff"/></svg>
<div class="a" style="left:497px;top:200px;width:19px;height:20px;background:#0f0f0f;border:1px solid #2a2a2a;border-radius:3px"></div>
<div class="a" style="left:501px;top:204px;width:12px;height:4.5px;background:#959595;"></div>
<div class="a" style="left:498px;top:210.5px;width:15px;height:5.5px;background:#959595;"></div>
<div class="a" style="left:515px;top:200px;width:2.2px;height:20px;background:#f4f4f4;"></div>
<div class="a" style="left:525px;top:200px;width:20px;height:20px;background:#0f0f0f;border:1px solid #2a2a2a;border-radius:3px"></div>
<svg style="left:525px;top:200px" width="21" height="20" viewBox="0 0 21 20"><circle cx="12.5" cy="2.3" r="2" fill="#fff"/><path d="M5.5 5.2Q7.5 3.3 10 4.5L8.2 9.5L11 11.5M10 4.5Q12 8 15.5 7.5" fill="none" stroke="#fff" stroke-width="2.1" stroke-linecap="round"/><path d="M8 10L5.5 12H0.5" fill="none" stroke="#777" stroke-width="1.2"/><path d="M12.3 17.6H10.3V11.5H18.8V17.6H17.3" fill="none" stroke="#fff" stroke-width="1.9"/><path d="M13.2 15.2L15.8 17.6L13.2 20" fill="none" stroke="#fff" stroke-width="1.6"/></svg>
<div class="a" style="left:553px;top:201px;width:18px;height:19px;background:#0f0f0f;border:1px solid #2a2a2a;border-radius:3px"></div>
<svg style="left:553px;top:204px" width="18" height="13" viewBox="0 0 18 13"><path d="M1.2 6.5Q9 -2.5 16.8 6.5Q9 15.5 1.2 6.5Z" fill="none" stroke="#fff" stroke-width="1.4"/><ellipse cx="9" cy="6.5" rx="2.3" ry="2.7" fill="#fff"/></svg>
<div class="a" style="left:36.5px;top:226.3px;width:23.5px;height:23.3px;background:#131313;border:1px solid #323232;border-radius:3px"></div>
<div class="a" style="left:37.5px;top:246.8px;width:21.5px;height:2.1px;background:#8cbf8c;border-radius:0 0 2px 2px"></div>
<svg style="left:40px;top:229px" width="17" height="17" viewBox="0 0 17 17"><circle cx="8" cy="3.2" r="1.5" fill="#fff"/><path d="M3 4.8L6.2 4.3L4.6 8.2L6.8 9.8L7.2 11.6M6.2 4.3L7.6 6.2L9.8 6.6M4.6 8.2L2.6 9.6" fill="none" stroke="#fff" stroke-width="1.4" stroke-linecap="round"/><path d="M2.6 9.6H0.3" stroke="#888" stroke-width="1"/><path d="M9 10.4L15.6 7.4V9.2L9 12Z" fill="#fff"/><rect x="9" y="12.4" width="7.2" height="4" fill="#fff"/></svg>
<div class="a" style="left:70px;top:227px;width:283px;height:22px;background:#0f0f0f;border:1px solid #333;border-radius:4px"></div>
<div class="tx" style="left:78.5px;top:231.69px;font-size:11px;color:#c8c8c8;letter-spacing:-0.12px">M_Neutral_Stand_Turn_090_L</div>
<svg style="left:329px;top:234px" width="12" height="7" viewBox="0 0 12 7"><path d="M1 1L6 6L11 1" fill="none" stroke="#c8c8c8" stroke-width="1.5"/></svg>
<svg style="left:361.5px;top:230px" width="17" height="17" viewBox="0 0 17 17"><path d="M13.4 3.5A7 7 0 1 0 13.4 12.5" fill="none" stroke="#c4c4c4" stroke-width="1.7"/><path d="M4.6 8H15.6M8.6 4L4.6 8L8.6 12" fill="none" stroke="#c4c4c4" stroke-width="1.8"/></svg>
<svg style="left:387px;top:229px" width="18" height="18" viewBox="0 0 18 18"><path d="M1 0.8H6.5L8.8 3.6H16V15H1Z" fill="#c4c4c4"/><circle cx="13" cy="10.6" r="5.4" fill="#1a1a1a"/><circle cx="13" cy="10.6" r="3.4" fill="none" stroke="#c4c4c4" stroke-width="1.5"/><path d="M10.6 13.3L7.6 16.8" stroke="#c4c4c4" stroke-width="1.5"/></svg>
<svg style="left:450px;top:229px" width="19" height="19" viewBox="0 0 19 19"><path d="M6 5H12.5A4.3 4.3 0 0 1 16.8 9.3V10.5" fill="none" stroke="#5c5c5c" stroke-width="1.9"/><path d="M1 5L6.5 1V9Z" fill="#5c5c5c"/><path d="M13 14H6.5A4.3 4.3 0 0 1 2.2 9.7V8.5" fill="none" stroke="#5c5c5c" stroke-width="1.9"/><path d="M18 14L12.5 10V18Z" fill="#5c5c5c"/></svg>
<svg style="left:476px;top:229px" width="16" height="18" viewBox="0 0 16 18"><path d="M5.5 1C9.5 0.5 12 3 9.5 5.2C7 7.2 1.5 7 1.8 10.8C2.1 13.5 5 13.5 9.5 13.5" fill="none" stroke="#fff" stroke-width="2"/><path d="M5.5 1C8 0.8 10 1.5 10.5 3" fill="none" stroke="#777" stroke-width="1.6"/><path d="M9 9.3L15 13.5L9 17.7Z" fill="#fff"/></svg>
<div class="a" style="left:497px;top:228px;width:19px;height:20px;background:#0f0f0f;border:1px solid #2a2a2a;border-radius:3px"></div>
<div class="a" style="left:501px;top:232px;width:12px;height:4.5px;background:#959595;"></div>
<div class="a" style="left:498px;top:238.5px;width:15px;height:5.5px;background:#959595;"></div>
<div class="a" style="left:515px;top:228px;width:2.2px;height:20px;background:#f4f4f4;"></div>
<div class="a" style="left:525px;top:228px;width:20px;height:20px;background:#0f0f0f;border:1px solid #2a2a2a;border-radius:3px"></div>
<svg style="left:525px;top:228px" width="21" height="20" viewBox="0 0 21 20"><circle cx="12.5" cy="2.3" r="2" fill="#fff"/><path d="M5.5 5.2Q7.5 3.3 10 4.5L8.2 9.5L11 11.5M10 4.5Q12 8 15.5 7.5" fill="none" stroke="#fff" stroke-width="2.1" stroke-linecap="round"/><path d="M8 10L5.5 12H0.5" fill="none" stroke="#777" stroke-width="1.2"/><path d="M12.3 17.6H10.3V11.5H18.8V17.6H17.3" fill="none" stroke="#fff" stroke-width="1.9"/><path d="M13.2 15.2L15.8 17.6L13.2 20" fill="none" stroke="#fff" stroke-width="1.6"/></svg>
<div class="a" style="left:553px;top:229px;width:18px;height:19px;background:#0f0f0f;border:1px solid #2a2a2a;border-radius:3px"></div>
<svg style="left:553px;top:232px" width="18" height="13" viewBox="0 0 18 13"><path d="M1.2 6.5Q9 -2.5 16.8 6.5Q9 15.5 1.2 6.5Z" fill="none" stroke="#fff" stroke-width="1.4"/><ellipse cx="9" cy="6.5" rx="2.3" ry="2.7" fill="#fff"/></svg>
<div class="a" style="left:36.5px;top:254.3px;width:23.5px;height:23.3px;background:#131313;border:1px solid #323232;border-radius:3px"></div>
<div class="a" style="left:37.5px;top:274.8px;width:21.5px;height:2.1px;background:#8cbf8c;border-radius:0 0 2px 2px"></div>
<svg style="left:40px;top:257px" width="17" height="17" viewBox="0 0 17 17"><circle cx="8" cy="3.2" r="1.5" fill="#fff"/><path d="M3 4.8L6.2 4.3L4.6 8.2L6.8 9.8L7.2 11.6M6.2 4.3L7.6 6.2L9.8 6.6M4.6 8.2L2.6 9.6" fill="none" stroke="#fff" stroke-width="1.4" stroke-linecap="round"/><path d="M2.6 9.6H0.3" stroke="#888" stroke-width="1"/><path d="M9 10.4L15.6 7.4V9.2L9 12Z" fill="#fff"/><rect x="9" y="12.4" width="7.2" height="4" fill="#fff"/></svg>
<div class="a" style="left:70px;top:255px;width:283px;height:22px;background:#0f0f0f;border:1px solid #333;border-radius:4px"></div>
<div class="tx" style="left:78.5px;top:259.69px;font-size:11px;color:#c8c8c8;letter-spacing:-0.12px">M_Neutral_Stand_Turn_090_R</div>
<svg style="left:329px;top:262px" width="12" height="7" viewBox="0 0 12 7"><path d="M1 1L6 6L11 1" fill="none" stroke="#c8c8c8" stroke-width="1.5"/></svg>
<svg style="left:361.5px;top:258px" width="17" height="17" viewBox="0 0 17 17"><path d="M13.4 3.5A7 7 0 1 0 13.4 12.5" fill="none" stroke="#c4c4c4" stroke-width="1.7"/><path d="M4.6 8H15.6M8.6 4L4.6 8L8.6 12" fill="none" stroke="#c4c4c4" stroke-width="1.8"/></svg>
<svg style="left:387px;top:257px" width="18" height="18" viewBox="0 0 18 18"><path d="M1 0.8H6.5L8.8 3.6H16V15H1Z" fill="#c4c4c4"/><circle cx="13" cy="10.6" r="5.4" fill="#1a1a1a"/><circle cx="13" cy="10.6" r="3.4" fill="none" stroke="#c4c4c4" stroke-width="1.5"/><path d="M10.6 13.3L7.6 16.8" stroke="#c4c4c4" stroke-width="1.5"/></svg>
<svg style="left:450px;top:257px" width="19" height="19" viewBox="0 0 19 19"><path d="M6 5H12.5A4.3 4.3 0 0 1 16.8 9.3V10.5" fill="none" stroke="#5c5c5c" stroke-width="1.9"/><path d="M1 5L6.5 1V9Z" fill="#5c5c5c"/><path d="M13 14H6.5A4.3 4.3 0 0 1 2.2 9.7V8.5" fill="none" stroke="#5c5c5c" stroke-width="1.9"/><path d="M18 14L12.5 10V18Z" fill="#5c5c5c"/></svg>
<svg style="left:476px;top:257px" width="16" height="18" viewBox="0 0 16 18"><path d="M5.5 1C9.5 0.5 12 3 9.5 5.2C7 7.2 1.5 7 1.8 10.8C2.1 13.5 5 13.5 9.5 13.5" fill="none" stroke="#fff" stroke-width="2"/><path d="M5.5 1C8 0.8 10 1.5 10.5 3" fill="none" stroke="#777" stroke-width="1.6"/><path d="M9 9.3L15 13.5L9 17.7Z" fill="#fff"/></svg>
<div class="a" style="left:497px;top:256px;width:19px;height:20px;background:#0f0f0f;border:1px solid #2a2a2a;border-radius:3px"></div>
<div class="a" style="left:501px;top:260px;width:12px;height:4.5px;background:#959595;"></div>
<div class="a" style="left:498px;top:266.5px;width:15px;height:5.5px;background:#959595;"></div>
<div class="a" style="left:515px;top:256px;width:2.2px;height:20px;background:#f4f4f4;"></div>
<div class="a" style="left:525px;top:256px;width:20px;height:20px;background:#0f0f0f;border:1px solid #2a2a2a;border-radius:3px"></div>
<svg style="left:525px;top:256px" width="21" height="20" viewBox="0 0 21 20"><circle cx="12.5" cy="2.3" r="2" fill="#fff"/><path d="M5.5 5.2Q7.5 3.3 10 4.5L8.2 9.5L11 11.5M10 4.5Q12 8 15.5 7.5" fill="none" stroke="#fff" stroke-width="2.1" stroke-linecap="round"/><path d="M8 10L5.5 12H0.5" fill="none" stroke="#777" stroke-width="1.2"/><path d="M12.3 17.6H10.3V11.5H18.8V17.6H17.3" fill="none" stroke="#fff" stroke-width="1.9"/><path d="M13.2 15.2L15.8 17.6L13.2 20" fill="none" stroke="#fff" stroke-width="1.6"/></svg>
<div class="a" style="left:553px;top:257px;width:18px;height:19px;background:#0f0f0f;border:1px solid #2a2a2a;border-radius:3px"></div>
<svg style="left:553px;top:260px" width="18" height="13" viewBox="0 0 18 13"><path d="M1.2 6.5Q9 -2.5 16.8 6.5Q9 15.5 1.2 6.5Z" fill="none" stroke="#fff" stroke-width="1.4"/><ellipse cx="9" cy="6.5" rx="2.3" ry="2.7" fill="#fff"/></svg>
<div class="a" style="left:36.5px;top:282.3px;width:23.5px;height:23.3px;background:#131313;border:1px solid #323232;border-radius:3px"></div>
<div class="a" style="left:37.5px;top:302.8px;width:21.5px;height:2.1px;background:#8cbf8c;border-radius:0 0 2px 2px"></div>
<svg style="left:40px;top:285px" width="17" height="17" viewBox="0 0 17 17"><circle cx="8" cy="3.2" r="1.5" fill="#fff"/><path d="M3 4.8L6.2 4.3L4.6 8.2L6.8 9.8L7.2 11.6M6.2 4.3L7.6 6.2L9.8 6.6M4.6 8.2L2.6 9.6" fill="none" stroke="#fff" stroke-width="1.4" stroke-linecap="round"/><path d="M2.6 9.6H0.3" stroke="#888" stroke-width="1"/><path d="M9 10.4L15.6 7.4V9.2L9 12Z" fill="#fff"/><rect x="9" y="12.4" width="7.2" height="4" fill="#fff"/></svg>
<div class="a" style="left:70px;top:283px;width:283px;height:22px;background:#0f0f0f;border:1px solid #333;border-radius:4px"></div>
<div class="tx" style="left:78.5px;top:287.69px;font-size:11px;color:#c8c8c8;letter-spacing:-0.12px">M_Neutral_Stand_Turn_135_L</div>
<svg style="left:329px;top:290px" width="12" height="7" viewBox="0 0 12 7"><path d="M1 1L6 6L11 1" fill="none" stroke="#c8c8c8" stroke-width="1.5"/></svg>
<svg style="left:361.5px;top:286px" width="17" height="17" viewBox="0 0 17 17"><path d="M13.4 3.5A7 7 0 1 0 13.4 12.5" fill="none" stroke="#c4c4c4" stroke-width="1.7"/><path d="M4.6 8H15.6M8.6 4L4.6 8L8.6 12" fill="none" stroke="#c4c4c4" stroke-width="1.8"/></svg>
<svg style="left:387px;top:285px" width="18" height="18" viewBox="0 0 18 18"><path d="M1 0.8H6.5L8.8 3.6H16V15H1Z" fill="#c4c4c4"/><circle cx="13" cy="10.6" r="5.4" fill="#1a1a1a"/><circle cx="13" cy="10.6" r="3.4" fill="none" stroke="#c4c4c4" stroke-width="1.5"/><path d="M10.6 13.3L7.6 16.8" stroke="#c4c4c4" stroke-width="1.5"/></svg>
<svg style="left:450px;top:285px" width="19" height="19" viewBox="0 0 19 19"><path d="M6 5H12.5A4.3 4.3 0 0 1 16.8 9.3V10.5" fill="none" stroke="#5c5c5c" stroke-width="1.9"/><path d="M1 5L6.5 1V9Z" fill="#5c5c5c"/><path d="M13 14H6.5A4.3 4.3 0 0 1 2.2 9.7V8.5" fill="none" stroke="#5c5c5c" stroke-width="1.9"/><path d="M18 14L12.5 10V18Z" fill="#5c5c5c"/></svg>
<svg style="left:476px;top:285px" width="16" height="18" viewBox="0 0 16 18"><path d="M5.5 1C9.5 0.5 12 3 9.5 5.2C7 7.2 1.5 7 1.8 10.8C2.1 13.5 5 13.5 9.5 13.5" fill="none" stroke="#fff" stroke-width="2"/><path d="M5.5 1C8 0.8 10 1.5 10.5 3" fill="none" stroke="#777" stroke-width="1.6"/><path d="M9 9.3L15 13.5L9 17.7Z" fill="#fff"/></svg>
<div class="a" style="left:497px;top:284px;width:19px;height:20px;background:#0f0f0f;border:1px solid #2a2a2a;border-radius:3px"></div>
<div class="a" style="left:501px;top:288px;width:12px;height:4.5px;background:#959595;"></div>
<div class="a" style="left:498px;top:294.5px;width:15px;height:5.5px;background:#959595;"></div>
<div class="a" style="left:515px;top:284px;width:2.2px;height:20px;background:#f4f4f4;"></div>
<div class="a" style="left:525px;top:284px;width:20px;height:20px;background:#0f0f0f;border:1px solid #2a2a2a;border-radius:3px"></div>
<svg style="left:525px;top:284px" width="21" height="20" viewBox="0 0 21 20"><circle cx="12.5" cy="2.3" r="2" fill="#fff"/><path d="M5.5 5.2Q7.5 3.3 10 4.5L8.2 9.5L11 11.5M10 4.5Q12 8 15.5 7.5" fill="none" stroke="#fff" stroke-width="2.1" stroke-linecap="round"/><path d="M8 10L5.5 12H0.5" fill="none" stroke="#777" stroke-width="1.2"/><path d="M12.3 17.6H10.3V11.5H18.8V17.6H17.3" fill="none" stroke="#fff" stroke-width="1.9"/><path d="M13.2 15.2L15.8 17.6L13.2 20" fill="none" stroke="#fff" stroke-width="1.6"/></svg>
<div class="a" style="left:553px;top:285px;width:18px;height:19px;background:#0f0f0f;border:1px solid #2a2a2a;border-radius:3px"></div>
<svg style="left:553px;top:288px" width="18" height="13" viewBox="0 0 18 13"><path d="M1.2 6.5Q9 -2.5 16.8 6.5Q9 15.5 1.2 6.5Z" fill="none" stroke="#fff" stroke-width="1.4"/><ellipse cx="9" cy="6.5" rx="2.3" ry="2.7" fill="#fff"/></svg>
<div class="a" style="left:36.5px;top:310.3px;width:23.5px;height:23.3px;background:#131313;border:1px solid #323232;border-radius:3px"></div>
<div class="a" style="left:37.5px;top:330.8px;width:21.5px;height:2.1px;background:#8cbf8c;border-radius:0 0 2px 2px"></div>
<svg style="left:40px;top:313px" width="17" height="17" viewBox="0 0 17 17"><circle cx="8" cy="3.2" r="1.5" fill="#fff"/><path d="M3 4.8L6.2 4.3L4.6 8.2L6.8 9.8L7.2 11.6M6.2 4.3L7.6 6.2L9.8 6.6M4.6 8.2L2.6 9.6" fill="none" stroke="#fff" stroke-width="1.4" stroke-linecap="round"/><path d="M2.6 9.6H0.3" stroke="#888" stroke-width="1"/><path d="M9 10.4L15.6 7.4V9.2L9 12Z" fill="#fff"/><rect x="9" y="12.4" width="7.2" height="4" fill="#fff"/></svg>
<div class="a" style="left:70px;top:311px;width:283px;height:22px;background:#0f0f0f;border:1px solid #333;border-radius:4px"></div>
<div class="tx" style="left:78.5px;top:315.69px;font-size:11px;color:#c8c8c8;letter-spacing:-0.12px">M_Neutral_Stand_Turn_135_R</div>
<svg style="left:329px;top:318px" width="12" height="7" viewBox="0 0 12 7"><path d="M1 1L6 6L11 1" fill="none" stroke="#c8c8c8" stroke-width="1.5"/></svg>
<svg style="left:361.5px;top:314px" width="17" height="17" viewBox="0 0 17 17"><path d="M13.4 3.5A7 7 0 1 0 13.4 12.5" fill="none" stroke="#c4c4c4" stroke-width="1.7"/><path d="M4.6 8H15.6M8.6 4L4.6 8L8.6 12" fill="none" stroke="#c4c4c4" stroke-width="1.8"/></svg>
<svg style="left:387px;top:313px" width="18" height="18" viewBox="0 0 18 18"><path d="M1 0.8H6.5L8.8 3.6H16V15H1Z" fill="#c4c4c4"/><circle cx="13" cy="10.6" r="5.4" fill="#1a1a1a"/><circle cx="13" cy="10.6" r="3.4" fill="none" stroke="#c4c4c4" stroke-width="1.5"/><path d="M10.6 13.3L7.6 16.8" stroke="#c4c4c4" stroke-width="1.5"/></svg>
<svg style="left:450px;top:313px" width="19" height="19" viewBox="0 0 19 19"><path d="M6 5H12.5A4.3 4.3 0 0 1 16.8 9.3V10.5" fill="none" stroke="#5c5c5c" stroke-width="1.9"/><path d="M1 5L6.5 1V9Z" fill="#5c5c5c"/><path d="M13 14H6.5A4.3 4.3 0 0 1 2.2 9.7V8.5" fill="none" stroke="#5c5c5c" stroke-width="1.9"/><path d="M18 14L12.5 10V18Z" fill="#5c5c5c"/></svg>
<svg style="left:476px;top:313px" width="16" height="18" viewBox="0 0 16 18"><path d="M5.5 1C9.5 0.5 12 3 9.5 5.2C7 7.2 1.5 7 1.8 10.8C2.1 13.5 5 13.5 9.5 13.5" fill="none" stroke="#fff" stroke-width="2"/><path d="M5.5 1C8 0.8 10 1.5 10.5 3" fill="none" stroke="#777" stroke-width="1.6"/><path d="M9 9.3L15 13.5L9 17.7Z" fill="#fff"/></svg>
<div class="a" style="left:497px;top:312px;width:19px;height:20px;background:#0f0f0f;border:1px solid #2a2a2a;border-radius:3px"></div>
<div class="a" style="left:501px;top:316px;width:12px;height:4.5px;background:#959595;"></div>
<div class="a" style="left:498px;top:322.5px;width:15px;height:5.5px;background:#959595;"></div>
<div class="a" style="left:515px;top:312px;width:2.2px;height:20px;background:#f4f4f4;"></div>
<div class="a" style="left:525px;top:312px;width:20px;height:20px;background:#0f0f0f;border:1px solid #2a2a2a;border-radius:3px"></div>
<svg style="left:525px;top:312px" width="21" height="20" viewBox="0 0 21 20"><circle cx="12.5" cy="2.3" r="2" fill="#fff"/><path d="M5.5 5.2Q7.5 3.3 10 4.5L8.2 9.5L11 11.5M10 4.5Q12 8 15.5 7.5" fill="none" stroke="#fff" stroke-width="2.1" stroke-linecap="round"/><path d="M8 10L5.5 12H0.5" fill="none" stroke="#777" stroke-width="1.2"/><path d="M12.3 17.6H10.3V11.5H18.8V17.6H17.3" fill="none" stroke="#fff" stroke-width="1.9"/><path d="M13.2 15.2L15.8 17.6L13.2 20" fill="none" stroke="#fff" stroke-width="1.6"/></svg>
<div class="a" style="left:553px;top:313px;width:18px;height:19px;background:#0f0f0f;border:1px solid #2a2a2a;border-radius:3px"></div>
<svg style="left:553px;top:316px" width="18" height="13" viewBox="0 0 18 13"><path d="M1.2 6.5Q9 -2.5 16.8 6.5Q9 15.5 1.2 6.5Z" fill="none" stroke="#fff" stroke-width="1.4"/><ellipse cx="9" cy="6.5" rx="2.3" ry="2.7" fill="#fff"/></svg>
<div class="a" style="left:36.5px;top:338.3px;width:23.5px;height:23.3px;background:#131313;border:1px solid #323232;border-radius:3px"></div>
<div class="a" style="left:37.5px;top:358.8px;width:21.5px;height:2.1px;background:#8cbf8c;border-radius:0 0 2px 2px"></div>
<svg style="left:40px;top:341px" width="17" height="17" viewBox="0 0 17 17"><circle cx="8" cy="3.2" r="1.5" fill="#fff"/><path d="M3 4.8L6.2 4.3L4.6 8.2L6.8 9.8L7.2 11.6M6.2 4.3L7.6 6.2L9.8 6.6M4.6 8.2L2.6 9.6" fill="none" stroke="#fff" stroke-width="1.4" stroke-linecap="round"/><path d="M2.6 9.6H0.3" stroke="#888" stroke-width="1"/><path d="M9 10.4L15.6 7.4V9.2L9 12Z" fill="#fff"/><rect x="9" y="12.4" width="7.2" height="4" fill="#fff"/></svg>
<div class="a" style="left:70px;top:339px;width:283px;height:22px;background:#0f0f0f;border:1px solid #333;border-radius:4px"></div>
<div class="tx" style="left:78.5px;top:343.69px;font-size:11px;color:#c8c8c8;letter-spacing:-0.12px">M_Neutral_Stand_Turn_180_L</div>
<svg style="left:329px;top:346px" width="12" height="7" viewBox="0 0 12 7"><path d="M1 1L6 6L11 1" fill="none" stroke="#c8c8c8" stroke-width="1.5"/></svg>
<svg style="left:361.5px;top:342px" width="17" height="17" viewBox="0 0 17 17"><path d="M13.4 3.5A7 7 0 1 0 13.4 12.5" fill="none" stroke="#c4c4c4" stroke-width="1.7"/><path d="M4.6 8H15.6M8.6 4L4.6 8L8.6 12" fill="none" stroke="#c4c4c4" stroke-width="1.8"/></svg>
<svg style="left:387px;top:341px" width="18" height="18" viewBox="0 0 18 18"><path d="M1 0.8H6.5L8.8 3.6H16V15H1Z" fill="#c4c4c4"/><circle cx="13" cy="10.6" r="5.4" fill="#1a1a1a"/><circle cx="13" cy="10.6" r="3.4" fill="none" stroke="#c4c4c4" stroke-width="1.5"/><path d="M10.6 13.3L7.6 16.8" stroke="#c4c4c4" stroke-width="1.5"/></svg>
<svg style="left:450px;top:341px" width="19" height="19" viewBox="0 0 19 19"><path d="M6 5H12.5A4.3 4.3 0 0 1 16.8 9.3V10.5" fill="none" stroke="#5c5c5c" stroke-width="1.9"/><path d="M1 5L6.5 1V9Z" fill="#5c5c5c"/><path d="M13 14H6.5A4.3 4.3 0 0 1 2.2 9.7V8.5" fill="none" stroke="#5c5c5c" stroke-width="1.9"/><path d="M18 14L12.5 10V18Z" fill="#5c5c5c"/></svg>
<svg style="left:476px;top:341px" width="16" height="18" viewBox="0 0 16 18"><path d="M5.5 1C9.5 0.5 12 3 9.5 5.2C7 7.2 1.5 7 1.8 10.8C2.1 13.5 5 13.5 9.5 13.5" fill="none" stroke="#fff" stroke-width="2"/><path d="M5.5 1C8 0.8 10 1.5 10.5 3" fill="none" stroke="#777" stroke-width="1.6"/><path d="M9 9.3L15 13.5L9 17.7Z" fill="#fff"/></svg>
<div class="a" style="left:497px;top:340px;width:19px;height:20px;background:#0f0f0f;border:1px solid #2a2a2a;border-radius:3px"></div>
<div class="a" style="left:501px;top:344px;width:12px;height:4.5px;background:#959595;"></div>
<div class="a" style="left:498px;top:350.5px;width:15px;height:5.5px;background:#959595;"></div>
<div class="a" style="left:515px;top:340px;width:2.2px;height:20px;background:#f4f4f4;"></div>
<div class="a" style="left:525px;top:340px;width:20px;height:20px;background:#0f0f0f;border:1px solid #2a2a2a;border-radius:3px"></div>
<svg style="left:525px;top:340px" width="21" height="20" viewBox="0 0 21 20"><circle cx="12.5" cy="2.3" r="2" fill="#fff"/><path d="M5.5 5.2Q7.5 3.3 10 4.5L8.2 9.5L11 11.5M10 4.5Q12 8 15.5 7.5" fill="none" stroke="#fff" stroke-width="2.1" stroke-linecap="round"/><path d="M8 10L5.5 12H0.5" fill="none" stroke="#777" stroke-width="1.2"/><path d="M12.3 17.6H10.3V11.5H18.8V17.6H17.3" fill="none" stroke="#fff" stroke-width="1.9"/><path d="M13.2 15.2L15.8 17.6L13.2 20" fill="none" stroke="#fff" stroke-width="1.6"/></svg>
<div class="a" style="left:553px;top:341px;width:18px;height:19px;background:#0f0f0f;border:1px solid #2a2a2a;border-radius:3px"></div>
<svg style="left:553px;top:344px" width="18" height="13" viewBox="0 0 18 13"><path d="M1.2 6.5Q9 -2.5 16.8 6.5Q9 15.5 1.2 6.5Z" fill="none" stroke="#fff" stroke-width="1.4"/><ellipse cx="9" cy="6.5" rx="2.3" ry="2.7" fill="#fff"/></svg>
<div class="a" style="left:36.5px;top:366.29999999999995px;width:23.5px;height:23.3px;background:#131313;border:1px solid #323232;border-radius:3px"></div>
<div class="a" style="left:37.5px;top:386.79999999999995px;width:21.5px;height:2.1px;background:#8cbf8c;border-radius:0 0 2px 2px"></div>
<svg style="left:40px;top:369px" width="17" height="17" viewBox="0 0 17 17"><circle cx="8" cy="3.2" r="1.5" fill="#fff"/><path d="M3 4.8L6.2 4.3L4.6 8.2L6.8 9.8L7.2 11.6M6.2 4.3L7.6 6.2L9.8 6.6M4.6 8.2L2.6 9.6" fill="none" stroke="#fff" stroke-width="1.4" stroke-linecap="round"/><path d="M2.6 9.6H0.3" stroke="#888" stroke-width="1"/><path d="M9 10.4L15.6 7.4V9.2L9 12Z" fill="#fff"/><rect x="9" y="12.4" width="7.2" height="4" fill="#fff"/></svg>
<div class="a" style="left:70px;top:367px;width:283px;height:22px;background:#0f0f0f;border:1px solid #333;border-radius:4px"></div>
<div class="tx" style="left:78.5px;top:371.69px;font-size:11px;color:#c8c8c8;letter-spacing:-0.12px">M_Neutral_Stand_Turn_180_R</div>
<svg style="left:329px;top:374px" width="12" height="7" viewBox="0 0 12 7"><path d="M1 1L6 6L11 1" fill="none" stroke="#c8c8c8" stroke-width="1.5"/></svg>
<svg style="left:361.5px;top:370px" width="17" height="17" viewBox="0 0 17 17"><path d="M13.4 3.5A7 7 0 1 0 13.4 12.5" fill="none" stroke="#c4c4c4" stroke-width="1.7"/><path d="M4.6 8H15.6M8.6 4L4.6 8L8.6 12" fill="none" stroke="#c4c4c4" stroke-width="1.8"/></svg>
<svg style="left:387px;top:369px" width="18" height="18" viewBox="0 0 18 18"><path d="M1 0.8H6.5L8.8 3.6H16V15H1Z" fill="#c4c4c4"/><circle cx="13" cy="10.6" r="5.4" fill="#1a1a1a"/><circle cx="13" cy="10.6" r="3.4" fill="none" stroke="#c4c4c4" stroke-width="1.5"/><path d="M10.6 13.3L7.6 16.8" stroke="#c4c4c4" stroke-width="1.5"/></svg>
<svg style="left:450px;top:369px" width="19" height="19" viewBox="0 0 19 19"><path d="M6 5H12.5A4.3 4.3 0 0 1 16.8 9.3V10.5" fill="none" stroke="#5c5c5c" stroke-width="1.9"/><path d="M1 5L6.5 1V9Z" fill="#5c5c5c"/><path d="M13 14H6.5A4.3 4.3 0 0 1 2.2 9.7V8.5" fill="none" stroke="#5c5c5c" stroke-width="1.9"/><path d="M18 14L12.5 10V18Z" fill="#5c5c5c"/></svg>
<svg style="left:476px;top:369px" width="16" height="18" viewBox="0 0 16 18"><path d="M5.5 1C9.5 0.5 12 3 9.5 5.2C7 7.2 1.5 7 1.8 10.8C2.1 13.5 5 13.5 9.5 13.5" fill="none" stroke="#fff" stroke-width="2"/><path d="M5.5 1C8 0.8 10 1.5 10.5 3" fill="none" stroke="#777" stroke-width="1.6"/><path d="M9 9.3L15 13.5L9 17.7Z" fill="#fff"/></svg>
<div class="a" style="left:497px;top:368px;width:19px;height:20px;background:#0f0f0f;border:1px solid #2a2a2a;border-radius:3px"></div>
<div class="a" style="left:501px;top:372px;width:12px;height:4.5px;background:#959595;"></div>
<div class="a" style="left:498px;top:378.5px;width:15px;height:5.5px;background:#959595;"></div>
<div class="a" style="left:515px;top:368px;width:2.2px;height:20px;background:#f4f4f4;"></div>
<div class="a" style="left:525px;top:368px;width:20px;height:20px;background:#0f0f0f;border:1px solid #2a2a2a;border-radius:3px"></div>
<svg style="left:525px;top:368px" width="21" height="20" viewBox="0 0 21 20"><circle cx="12.5" cy="2.3" r="2" fill="#fff"/><path d="M5.5 5.2Q7.5 3.3 10 4.5L8.2 9.5L11 11.5M10 4.5Q12 8 15.5 7.5" fill="none" stroke="#fff" stroke-width="2.1" stroke-linecap="round"/><path d="M8 10L5.5 12H0.5" fill="none" stroke="#777" stroke-width="1.2"/><path d="M12.3 17.6H10.3V11.5H18.8V17.6H17.3" fill="none" stroke="#fff" stroke-width="1.9"/><path d="M13.2 15.2L15.8 17.6L13.2 20" fill="none" stroke="#fff" stroke-width="1.6"/></svg>
<div class="a" style="left:553px;top:369px;width:18px;height:19px;background:#0f0f0f;border:1px solid #2a2a2a;border-radius:3px"></div>
<svg style="left:553px;top:372px" width="18" height="13" viewBox="0 0 18 13"><path d="M1.2 6.5Q9 -2.5 16.8 6.5Q9 15.5 1.2 6.5Z" fill="none" stroke="#fff" stroke-width="1.4"/><ellipse cx="9" cy="6.5" rx="2.3" ry="2.7" fill="#fff"/></svg>
<div class="a" style="left:36.5px;top:394.29999999999995px;width:23.5px;height:23.3px;background:#131313;border:1px solid #323232;border-radius:3px"></div>
<div class="a" style="left:37.5px;top:414.79999999999995px;width:21.5px;height:2.1px;background:#8cbf8c;border-radius:0 0 2px 2px"></div>
<svg style="left:40px;top:397px" width="17" height="17" viewBox="0 0 17 17"><circle cx="8" cy="3.2" r="1.5" fill="#fff"/><path d="M3 4.8L6.2 4.3L4.6 8.2L6.8 9.8L7.2 11.6M6.2 4.3L7.6 6.2L9.8 6.6M4.6 8.2L2.6 9.6" fill="none" stroke="#fff" stroke-width="1.4" stroke-linecap="round"/><path d="M2.6 9.6H0.3" stroke="#888" stroke-width="1"/><path d="M9 10.4L15.6 7.4V9.2L9 12Z" fill="#fff"/><rect x="9" y="12.4" width="7.2" height="4" fill="#fff"/></svg>
<div class="a" style="left:70px;top:395px;width:283px;height:22px;background:#0f0f0f;border:1px solid #333;border-radius:4px"></div>
<div class="tx" style="left:78.5px;top:399.69px;font-size:11px;color:#c8c8c8;letter-spacing:-0.12px">M_Neutral_Walk_Box_B_LL_Lfoot</div>
<svg style="left:329px;top:402px" width="12" height="7" viewBox="0 0 12 7"><path d="M1 1L6 6L11 1" fill="none" stroke="#c8c8c8" stroke-width="1.5"/></svg>
<svg style="left:361.5px;top:398px" width="17" height="17" viewBox="0 0 17 17"><path d="M13.4 3.5A7 7 0 1 0 13.4 12.5" fill="none" stroke="#c4c4c4" stroke-width="1.7"/><path d="M4.6 8H15.6M8.6 4L4.6 8L8.6 12" fill="none" stroke="#c4c4c4" stroke-width="1.8"/></svg>
<svg style="left:387px;top:397px" width="18" height="18" viewBox="0 0 18 18"><path d="M1 0.8H6.5L8.8 3.6H16V15H1Z" fill="#c4c4c4"/><circle cx="13" cy="10.6" r="5.4" fill="#1a1a1a"/><circle cx="13" cy="10.6" r="3.4" fill="none" stroke="#c4c4c4" stroke-width="1.5"/><path d="M10.6 13.3L7.6 16.8" stroke="#c4c4c4" stroke-width="1.5"/></svg>
<svg style="left:450px;top:397px" width="19" height="19" viewBox="0 0 19 19"><path d="M6 5H12.5A4.3 4.3 0 0 1 16.8 9.3V10.5" fill="none" stroke="#5c5c5c" stroke-width="1.9"/><path d="M1 5L6.5 1V9Z" fill="#5c5c5c"/><path d="M13 14H6.5A4.3 4.3 0 0 1 2.2 9.7V8.5" fill="none" stroke="#5c5c5c" stroke-width="1.9"/><path d="M18 14L12.5 10V18Z" fill="#5c5c5c"/></svg>
<svg style="left:476px;top:397px" width="16" height="18" viewBox="0 0 16 18"><path d="M5.5 1C9.5 0.5 12 3 9.5 5.2C7 7.2 1.5 7 1.8 10.8C2.1 13.5 5 13.5 9.5 13.5" fill="none" stroke="#fff" stroke-width="2"/><path d="M5.5 1C8 0.8 10 1.5 10.5 3" fill="none" stroke="#777" stroke-width="1.6"/><path d="M9 9.3L15 13.5L9 17.7Z" fill="#fff"/></svg>
<div class="a" style="left:497px;top:396px;width:19px;height:20px;background:#0f0f0f;border:1px solid #2a2a2a;border-radius:3px"></div>
<div class="a" style="left:501px;top:400px;width:12px;height:4.5px;background:#959595;"></div>
<div class="a" style="left:498px;top:406.5px;width:15px;height:5.5px;background:#959595;"></div>
<div class="a" style="left:515px;top:396px;width:2.2px;height:20px;background:#f4f4f4;"></div>
<div class="a" style="left:525px;top:396px;width:20px;height:20px;background:#0f0f0f;border:1px solid #2a2a2a;border-radius:3px"></div>
<svg style="left:525px;top:396px" width="21" height="20" viewBox="0 0 21 20"><circle cx="12.5" cy="2.3" r="2" fill="#fff"/><path d="M5.5 5.2Q7.5 3.3 10 4.5L8.2 9.5L11 11.5M10 4.5Q12 8 15.5 7.5" fill="none" stroke="#fff" stroke-width="2.1" stroke-linecap="round"/><path d="M8 10L5.5 12H0.5" fill="none" stroke="#777" stroke-width="1.2"/><path d="M12.3 17.6H10.3V11.5H18.8V17.6H17.3" fill="none" stroke="#fff" stroke-width="1.9"/><path d="M13.2 15.2L15.8 17.6L13.2 20" fill="none" stroke="#fff" stroke-width="1.6"/></svg>
<div class="a" style="left:553px;top:397px;width:18px;height:19px;background:#0f0f0f;border:1px solid #2a2a2a;border-radius:3px"></div>
<svg style="left:553px;top:400px" width="18" height="13" viewBox="0 0 18 13"><path d="M1.2 6.5Q9 -2.5 16.8 6.5Q9 15.5 1.2 6.5Z" fill="none" stroke="#fff" stroke-width="1.4"/><ellipse cx="9" cy="6.5" rx="2.3" ry="2.7" fill="#fff"/></svg>
<div class="a" style="left:36.5px;top:422.29999999999995px;width:23.5px;height:23.3px;background:#131313;border:1px solid #323232;border-radius:3px"></div>
<div class="a" style="left:37.5px;top:442.79999999999995px;width:21.5px;height:2.1px;background:#8cbf8c;border-radius:0 0 2px 2px"></div>
<svg style="left:40px;top:425px" width="17" height="17" viewBox="0 0 17 17"><circle cx="8" cy="3.2" r="1.5" fill="#fff"/><path d="M3 4.8L6.2 4.3L4.6 8.2L6.8 9.8L7.2 11.6M6.2 4.3L7.6 6.2L9.8 6.6M4.6 8.2L2.6 9.6" fill="none" stroke="#fff" stroke-width="1.4" stroke-linecap="round"/><path d="M2.6 9.6H0.3" stroke="#888" stroke-width="1"/><path d="M9 10.4L15.6 7.4V9.2L9 12Z" fill="#fff"/><rect x="9" y="12.4" width="7.2" height="4" fill="#fff"/></svg>
<div class="a" style="left:70px;top:423px;width:283px;height:22px;background:#0f0f0f;border:1px solid #333;border-radius:4px"></div>
<div class="tx" style="left:78.5px;top:427.69px;font-size:11px;color:#c8c8c8;letter-spacing:-0.12px">M_Neutral_Walk_Box_B_LL_Rfoot</div>
<svg style="left:329px;top:430px" width="12" height="7" viewBox="0 0 12 7"><path d="M1 1L6 6L11 1" fill="none" stroke="#c8c8c8" stroke-width="1.5"/></svg>
<svg style="left:361.5px;top:426px" width="17" height="17" viewBox="0 0 17 17"><path d="M13.4 3.5A7 7 0 1 0 13.4 12.5" fill="none" stroke="#c4c4c4" stroke-width="1.7"/><path d="M4.6 8H15.6M8.6 4L4.6 8L8.6 12" fill="none" stroke="#c4c4c4" stroke-width="1.8"/></svg>
<svg style="left:387px;top:425px" width="18" height="18" viewBox="0 0 18 18"><path d="M1 0.8H6.5L8.8 3.6H16V15H1Z" fill="#c4c4c4"/><circle cx="13" cy="10.6" r="5.4" fill="#1a1a1a"/><circle cx="13" cy="10.6" r="3.4" fill="none" stroke="#c4c4c4" stroke-width="1.5"/><path d="M10.6 13.3L7.6 16.8" stroke="#c4c4c4" stroke-width="1.5"/></svg>
<svg style="left:450px;top:425px" width="19" height="19" viewBox="0 0 19 19"><path d="M6 5H12.5A4.3 4.3 0 0 1 16.8 9.3V10.5" fill="none" stroke="#5c5c5c" stroke-width="1.9"/><path d="M1 5L6.5 1V9Z" fill="#5c5c5c"/><path d="M13 14H6.5A4.3 4.3 0 0 1 2.2 9.7V8.5" fill="none" stroke="#5c5c5c" stroke-width="1.9"/><path d="M18 14L12.5 10V18Z" fill="#5c5c5c"/></svg>
<svg style="left:476px;top:425px" width="16" height="18" viewBox="0 0 16 18"><path d="M5.5 1C9.5 0.5 12 3 9.5 5.2C7 7.2 1.5 7 1.8 10.8C2.1 13.5 5 13.5 9.5 13.5" fill="none" stroke="#fff" stroke-width="2"/><path d="M5.5 1C8 0.8 10 1.5 10.5 3" fill="none" stroke="#777" stroke-width="1.6"/><path d="M9 9.3L15 13.5L9 17.7Z" fill="#fff"/></svg>
<div class="a" style="left:497px;top:424px;width:19px;height:20px;background:#0f0f0f;border:1px solid #2a2a2a;border-radius:3px"></div>
<div class="a" style="left:501px;top:428px;width:12px;height:4.5px;background:#959595;"></div>
<div class="a" style="left:498px;top:434.5px;width:15px;height:5.5px;background:#959595;"></div>
<div class="a" style="left:515px;top:424px;width:2.2px;height:20px;background:#f4f4f4;"></div>
<div class="a" style="left:525px;top:424px;width:20px;height:20px;background:#0f0f0f;border:1px solid #2a2a2a;border-radius:3px"></div>
<svg style="left:525px;top:424px" width="21" height="20" viewBox="0 0 21 20"><circle cx="12.5" cy="2.3" r="2" fill="#fff"/><path d="M5.5 5.2Q7.5 3.3 10 4.5L8.2 9.5L11 11.5M10 4.5Q12 8 15.5 7.5" fill="none" stroke="#fff" stroke-width="2.1" stroke-linecap="round"/><path d="M8 10L5.5 12H0.5" fill="none" stroke="#777" stroke-width="1.2"/><path d="M12.3 17.6H10.3V11.5H18.8V17.6H17.3" fill="none" stroke="#fff" stroke-width="1.9"/><path d="M13.2 15.2L15.8 17.6L13.2 20" fill="none" stroke="#fff" stroke-width="1.6"/></svg>
<div class="a" style="left:553px;top:425px;width:18px;height:19px;background:#0f0f0f;border:1px solid #2a2a2a;border-radius:3px"></div>
<svg style="left:553px;top:428px" width="18" height="13" viewBox="0 0 18 13"><path d="M1.2 6.5Q9 -2.5 16.8 6.5Q9 15.5 1.2 6.5Z" fill="none" stroke="#fff" stroke-width="1.4"/><ellipse cx="9" cy="6.5" rx="2.3" ry="2.7" fill="#fff"/></svg>
<div class="a" style="left:36.5px;top:450.29999999999995px;width:23.5px;height:23.3px;background:#131313;border:1px solid #323232;border-radius:3px"></div>
<div class="a" style="left:37.5px;top:470.79999999999995px;width:21.5px;height:2.1px;background:#8cbf8c;border-radius:0 0 2px 2px"></div>
<svg style="left:40px;top:453px" width="17" height="17" viewBox="0 0 17 17"><circle cx="8" cy="3.2" r="1.5" fill="#fff"/><path d="M3 4.8L6.2 4.3L4.6 8.2L6.8 9.8L7.2 11.6M6.2 4.3L7.6 6.2L9.8 6.6M4.6 8.2L2.6 9.6" fill="none" stroke="#fff" stroke-width="1.4" stroke-linecap="round"/><path d="M2.6 9.6H0.3" stroke="#888" stroke-width="1"/><path d="M9 10.4L15.6 7.4V9.2L9 12Z" fill="#fff"/><rect x="9" y="12.4" width="7.2" height="4" fill="#fff"/></svg>
<div class="a" style="left:70px;top:451px;width:283px;height:22px;background:#0f0f0f;border:1px solid #333;border-radius:4px"></div>
<div class="tx" style="left:78.5px;top:455.69px;font-size:11px;color:#c8c8c8;letter-spacing:-0.12px">M_Neutral_Walk_Box_B_LR_Lfoot</div>
<svg style="left:329px;top:458px" width="12" height="7" viewBox="0 0 12 7"><path d="M1 1L6 6L11 1" fill="none" stroke="#c8c8c8" stroke-width="1.5"/></svg>
<svg style="left:361.5px;top:454px" width="17" height="17" viewBox="0 0 17 17"><path d="M13.4 3.5A7 7 0 1 0 13.4 12.5" fill="none" stroke="#c4c4c4" stroke-width="1.7"/><path d="M4.6 8H15.6M8.6 4L4.6 8L8.6 12" fill="none" stroke="#c4c4c4" stroke-width="1.8"/></svg>
<svg style="left:387px;top:453px" width="18" height="18" viewBox="0 0 18 18"><path d="M1 0.8H6.5L8.8 3.6H16V15H1Z" fill="#c4c4c4"/><circle cx="13" cy="10.6" r="5.4" fill="#1a1a1a"/><circle cx="13" cy="10.6" r="3.4" fill="none" stroke="#c4c4c4" stroke-width="1.5"/><path d="M10.6 13.3L7.6 16.8" stroke="#c4c4c4" stroke-width="1.5"/></svg>
<svg style="left:450px;top:453px" width="19" height="19" viewBox="0 0 19 19"><path d="M6 5H12.5A4.3 4.3 0 0 1 16.8 9.3V10.5" fill="none" stroke="#5c5c5c" stroke-width="1.9"/><path d="M1 5L6.5 1V9Z" fill="#5c5c5c"/><path d="M13 14H6.5A4.3 4.3 0 0 1 2.2 9.7V8.5" fill="none" stroke="#5c5c5c" stroke-width="1.9"/><path d="M18 14L12.5 10V18Z" fill="#5c5c5c"/></svg>
<svg style="left:476px;top:453px" width="16" height="18" viewBox="0 0 16 18"><path d="M5.5 1C9.5 0.5 12 3 9.5 5.2C7 7.2 1.5 7 1.8 10.8C2.1 13.5 5 13.5 9.5 13.5" fill="none" stroke="#fff" stroke-width="2"/><path d="M5.5 1C8 0.8 10 1.5 10.5 3" fill="none" stroke="#777" stroke-width="1.6"/><path d="M9 9.3L15 13.5L9 17.7Z" fill="#fff"/></svg>
<div class="a" style="left:497px;top:452px;width:19px;height:20px;background:#0f0f0f;border:1px solid #2a2a2a;border-radius:3px"></div>
<div class="a" style="left:501px;top:456px;width:12px;height:4.5px;background:#959595;"></div>
<div class="a" style="left:498px;top:462.5px;width:15px;height:5.5px;background:#959595;"></div>
<div class="a" style="left:515px;top:452px;width:2.2px;height:20px;background:#f4f4f4;"></div>
<div class="a" style="left:525px;top:452px;width:20px;height:20px;background:#0f0f0f;border:1px solid #2a2a2a;border-radius:3px"></div>
<svg style="left:525px;top:452px" width="21" height="20" viewBox="0 0 21 20"><circle cx="12.5" cy="2.3" r="2" fill="#fff"/><path d="M5.5 5.2Q7.5 3.3 10 4.5L8.2 9.5L11 11.5M10 4.5Q12 8 15.5 7.5" fill="none" stroke="#fff" stroke-width="2.1" stroke-linecap="round"/><path d="M8 10L5.5 12H0.5" fill="none" stroke="#777" stroke-width="1.2"/><path d="M12.3 17.6H10.3V11.5H18.8V17.6H17.3" fill="none" stroke="#fff" stroke-width="1.9"/><path d="M13.2 15.2L15.8 17.6L13.2 20" fill="none" stroke="#fff" stroke-width="1.6"/></svg>
<div class="a" style="left:553px;top:453px;width:18px;height:19px;background:#0f0f0f;border:1px solid #2a2a2a;border-radius:3px"></div>
<svg style="left:553px;top:456px" width="18" height="13" viewBox="0 0 18 13"><path d="M1.2 6.5Q9 -2.5 16.8 6.5Q9 15.5 1.2 6.5Z" fill="none" stroke="#fff" stroke-width="1.4"/><ellipse cx="9" cy="6.5" rx="2.3" ry="2.7" fill="#fff"/></svg>
<div class="a" style="left:36.5px;top:478.29999999999995px;width:23.5px;height:23.3px;background:#131313;border:1px solid #323232;border-radius:3px"></div>
<div class="a" style="left:37.5px;top:498.79999999999995px;width:21.5px;height:2.1px;background:#8cbf8c;border-radius:0 0 2px 2px"></div>
<svg style="left:40px;top:481px" width="17" height="17" viewBox="0 0 17 17"><circle cx="8" cy="3.2" r="1.5" fill="#fff"/><path d="M3 4.8L6.2 4.3L4.6 8.2L6.8 9.8L7.2 11.6M6.2 4.3L7.6 6.2L9.8 6.6M4.6 8.2L2.6 9.6" fill="none" stroke="#fff" stroke-width="1.4" stroke-linecap="round"/><path d="M2.6 9.6H0.3" stroke="#888" stroke-width="1"/><path d="M9 10.4L15.6 7.4V9.2L9 12Z" fill="#fff"/><rect x="9" y="12.4" width="7.2" height="4" fill="#fff"/></svg>
<div class="a" style="left:70px;top:479px;width:283px;height:22px;background:#0f0f0f;border:1px solid #333;border-radius:4px"></div>
<div class="tx" style="left:78.5px;top:483.69px;font-size:11px;color:#c8c8c8;letter-spacing:-0.12px">M_Neutral_Walk_Box_B_LR_Rfoot</div>
<svg style="left:329px;top:486px" width="12" height="7" viewBox="0 0 12 7"><path d="M1 1L6 6L11 1" fill="none" stroke="#c8c8c8" stroke-width="1.5"/></svg>
<svg style="left:361.5px;top:482px" width="17" height="17" viewBox="0 0 17 17"><path d="M13.4 3.5A7 7 0 1 0 13.4 12.5" fill="none" stroke="#c4c4c4" stroke-width="1.7"/><path d="M4.6 8H15.6M8.6 4L4.6 8L8.6 12" fill="none" stroke="#c4c4c4" stroke-width="1.8"/></svg>
<svg style="left:387px;top:481px" width="18" height="18" viewBox="0 0 18 18"><path d="M1 0.8H6.5L8.8 3.6H16V15H1Z" fill="#c4c4c4"/><circle cx="13" cy="10.6" r="5.4" fill="#1a1a1a"/><circle cx="13" cy="10.6" r="3.4" fill="none" stroke="#c4c4c4" stroke-width="1.5"/><path d="M10.6 13.3L7.6 16.8" stroke="#c4c4c4" stroke-width="1.5"/></svg>
<svg style="left:450px;top:481px" width="19" height="19" viewBox="0 0 19 19"><path d="M6 5H12.5A4.3 4.3 0 0 1 16.8 9.3V10.5" fill="none" stroke="#5c5c5c" stroke-width="1.9"/><path d="M1 5L6.5 1V9Z" fill="#5c5c5c"/><path d="M13 14H6.5A4.3 4.3 0 0 1 2.2 9.7V8.5" fill="none" stroke="#5c5c5c" stroke-width="1.9"/><path d="M18 14L12.5 10V18Z" fill="#5c5c5c"/></svg>
<svg style="left:476px;top:481px" width="16" height="18" viewBox="0 0 16 18"><path d="M5.5 1C9.5 0.5 12 3 9.5 5.2C7 7.2 1.5 7 1.8 10.8C2.1 13.5 5 13.5 9.5 13.5" fill="none" stroke="#fff" stroke-width="2"/><path d="M5.5 1C8 0.8 10 1.5 10.5 3" fill="none" stroke="#777" stroke-width="1.6"/><path d="M9 9.3L15 13.5L9 17.7Z" fill="#fff"/></svg>
<div class="a" style="left:497px;top:480px;width:19px;height:20px;background:#0f0f0f;border:1px solid #2a2a2a;border-radius:3px"></div>
<div class="a" style="left:501px;top:484px;width:12px;height:4.5px;background:#959595;"></div>
<div class="a" style="left:498px;top:490.5px;width:15px;height:5.5px;background:#959595;"></div>
<div class="a" style="left:515px;top:480px;width:2.2px;height:20px;background:#f4f4f4;"></div>
<div class="a" style="left:525px;top:480px;width:20px;height:20px;background:#0f0f0f;border:1px solid #2a2a2a;border-radius:3px"></div>
<svg style="left:525px;top:480px" width="21" height="20" viewBox="0 0 21 20"><circle cx="12.5" cy="2.3" r="2" fill="#fff"/><path d="M5.5 5.2Q7.5 3.3 10 4.5L8.2 9.5L11 11.5M10 4.5Q12 8 15.5 7.5" fill="none" stroke="#fff" stroke-width="2.1" stroke-linecap="round"/><path d="M8 10L5.5 12H0.5" fill="none" stroke="#777" stroke-width="1.2"/><path d="M12.3 17.6H10.3V11.5H18.8V17.6H17.3" fill="none" stroke="#fff" stroke-width="1.9"/><path d="M13.2 15.2L15.8 17.6L13.2 20" fill="none" stroke="#fff" stroke-width="1.6"/></svg>
<div class="a" style="left:553px;top:481px;width:18px;height:19px;background:#0f0f0f;border:1px solid #2a2a2a;border-radius:3px"></div>
<svg style="left:553px;top:484px" width="18" height="13" viewBox="0 0 18 13"><path d="M1.2 6.5Q9 -2.5 16.8 6.5Q9 15.5 1.2 6.5Z" fill="none" stroke="#fff" stroke-width="1.4"/><ellipse cx="9" cy="6.5" rx="2.3" ry="2.7" fill="#fff"/></svg>
</div>
<div class="a" style="left:606px;top:154px;width:8px;height:72px;background:#5a5a5a;border-radius:4px"></div>
<div class="a" style="left:7px;top:655px;width:160px;height:25px;background:#242424;border-radius:5px 5px 0 0"></div>
<svg style="left:12px;top:659px;" width="16" height="15" viewBox="0 0 16 15"><path d="M1 1.5H7M1 4H4.5M9 9.5H15M10 12H15M6.5 14.5H15" stroke="#7a7a7a" stroke-width="0.9"/><path d="M0.8 14.2L2.4 9.6L10.2 1.8L13.2 4.8L5.4 12.6Z" fill="#c8c8c8"/><path d="M11 1L12.2 -0.2L15.2 2.8L14 4Z" fill="#c8c8c8"/></svg>
<div class="tx" style="left:34.5px;top:660.00px;font-size:13px;color:#c8c8c8;letter-spacing:-0.05px;font-weight:normal;">Database Details</div>
<svg style="left:145.5px;top:662px;" width="8" height="8" viewBox="0 0 8 8"><path d="M1 1L7 7M7 1L1 7" stroke="#c8c8c8" stroke-width="1.5"/></svg>
<div class="a" style="left:7px;top:680px;width:611px;height:338px;background:#242424;"></div>
<div class="a" style="left:16px;top:692px;width:545px;height:22px;background:#0f0f0f;border-radius:11px;border:1px solid #2e2e2e"></div>
<svg style="left:21px;top:697px;" width="14" height="13" viewBox="0 0 14 13"><circle cx="5.6" cy="5.6" r="4.6" fill="none" stroke="#c8c8c8" stroke-width="1.4"/><path d="M9 9L13 12.5" stroke="#c8c8c8" stroke-width="1.5"/></svg>
<div class="tx" style="left:42.4px;top:696.00px;font-size:13px;color:#5e5e5e;letter-spacing:-0.2px;font-weight:normal;">Search</div>
<svg style="left:575px;top:696px;" width="14" height="14" viewBox="0 0 14 14"><rect x="0" y="0" width="14" height="14" fill="#d0d0d0"/><rect x="2" y="2" width="10" height="2.3" fill="#1a1a1a"/><rect x="2" y="6" width="4.2" height="2" fill="#1a1a1a"/><rect x="7.8" y="6" width="4.2" height="2" fill="#1a1a1a"/><rect x="2" y="10" width="4.2" height="2" fill="#1a1a1a"/><rect x="7.8" y="10" width="4.2" height="2" fill="#1a1a1a"/></svg>
<svg style="left:598px;top:695px;" width="16" height="16" viewBox="0 0 16 16"><path d="M8 0.8V15.2M0.8 8H15.2M2.9 2.9L13.1 13.1M2.9 13.1L13.1 2.9" stroke="#c8c8c8" stroke-width="2.4"/><circle cx="8" cy="8" r="5.2" fill="#c8c8c8"/><circle cx="8" cy="8" r="3.5" fill="#242424"/><circle cx="8" cy="8" r="2.2" fill="none" stroke="#a0a0a0" stroke-width="1"/></svg>
<div class="a" style="left:7px;top:722px;width:595px;height:26px;background:#2f2f2f;"></div>
<svg style="left:12px;top:731px;" width="11" height="8" viewBox="0 0 11 8"><path d="M0 0H10L5 7Z" fill="#8a8a8a"/></svg>
<div class="tx" style="left:29px;top:728.82px;font-size:11.2px;color:#d0d0d0;letter-spacing:-0.25px;font-weight:bold;">Database</div>
<div class="a" style="left:602px;top:722px;width:16px;height:296px;background:#1c1c1c;"></div>
<div class="a" style="left:606px;top:724px;width:8px;height:156px;background:#5a5a5a;border-radius:4px"></div>
<div class="a" style="left:7px;top:748px;width:595px;height:1px;background:#1a1a1a;"></div>
<div class="tx" style="left:29px;top:770.69px;font-size:11px;color:#c0c0c0;letter-spacing:0.1px;font-weight:normal;">Schema</div>
<div class="a" style="left:7px;top:804px;width:595px;height:1px;background:#1a1a1a;"></div>
<div class="tx" style="left:29px;top:812.19px;font-size:11px;color:#c0c0c0;letter-spacing:0.1px;font-weight:normal;">Continuing Pose Cost Bias</div>
<div class="a" style="left:7px;top:831px;width:595px;height:1px;background:#1a1a1a;"></div>
<div class="tx" style="left:29px;top:839.19px;font-size:11px;color:#c0c0c0;letter-spacing:0.1px;font-weight:normal;">Base Cost Bias</div>
<div class="a" style="left:7px;top:858px;width:595px;height:1px;background:#1a1a1a;"></div>
<div class="tx" style="left:29px;top:866.19px;font-size:11px;color:#c0c0c0;letter-spacing:0.1px;font-weight:normal;">Looping Cost Bias</div>
<div class="a" style="left:7px;top:885px;width:595px;height:1px;background:#1a1a1a;"></div>
<div class="tx" style="left:29px;top:893.19px;font-size:11px;color:#c0c0c0;letter-spacing:0.1px;font-weight:normal;">Continuing Interaction Cost Bias</div>
<div class="a" style="left:7px;top:912px;width:595px;height:1px;background:#1a1a1a;"></div>
<div class="tx" style="left:29px;top:920.19px;font-size:11px;color:#c0c0c0;letter-spacing:0.1px;font-weight:normal;">Exclude from Database Parameters</div>
<div class="a" style="left:7px;top:939px;width:595px;height:1px;background:#1a1a1a;"></div>
<div class="tx" style="left:29px;top:947.19px;font-size:11px;color:#c0c0c0;letter-spacing:0.1px;font-weight:normal;">Additional Extrapolation Time</div>
<div class="a" style="left:7px;top:966px;width:595px;height:1px;background:#1a1a1a;"></div>
<div class="tx" style="left:29px;top:974.19px;font-size:11px;color:#c0c0c0;letter-spacing:0.1px;font-weight:normal;">Tags</div>
<div class="a" style="left:7px;top:993px;width:595px;height:1px;background:#1a1a1a;"></div>
<div class="tx" style="left:29px;top:1014.69px;font-size:11px;color:#c0c0c0;letter-spacing:0.1px;font-weight:normal;">Normalization Set</div>
<div class="a" style="left:244px;top:748px;width:1px;height:270px;background:#1a1a1a;"></div>
<div class="a" style="left:579px;top:748px;width:1px;height:270px;background:#1a1a1a;"></div>
<div class="a" style="left:257px;top:753px;width:48px;height:48px;background:#1a1a1a;border:1px solid #303030;border-radius:3px"></div>
<div class="a" style="left:258px;top:798px;width:46px;height:2px;background:#2a6d99;"></div>
<svg style="left:268px;top:762px;" width="27" height="27" viewBox="0 0 27 27"><defs><linearGradient id="pg" x1="0" y1="0" x2="1" y2="1"><stop offset="0" stop-color="#9a9a9a"/><stop offset="1" stop-color="#f0f0f0"/></linearGradient></defs><path d="M13 13.5L20 3.5A12 12 0 1 0 25.5 13.5Z" fill="url(#pg)"/><path d="M14.5 12L21 3.2A12 12 0 0 1 25.3 12Z" fill="#8a8a8a"/></svg>
<div class="a" style="left:314px;top:752px;width:192px;height:22px;background:#0f0f0f;border:1px solid #333;border-radius:4px"></div>
<div class="tx" style="left:322.5px;top:758.47px;font-size:11.5px;color:#d0d0d0;letter-spacing:-0.1px;font-weight:normal;">PSS_TDefault</div>
<svg style="left:483px;top:759px;" width="12" height="7" viewBox="0 0 12 7"><path d="M1 1L6 6L11 1" fill="none" stroke="#d0d0d0" stroke-width="1.5"/></svg>
<svg style="left:318.5px;top:779px;" width="17" height="17" viewBox="0 0 17 17"><path d="M13.4 3.5A7 7 0 1 0 13.4 12.5" fill="none" stroke="#c4c4c4" stroke-width="1.7"/><path d="M4.6 8H15.6M8.6 4L4.6 8L8.6 12" fill="none" stroke="#c4c4c4" stroke-width="1.8"/></svg>
<svg style="left:344px;top:778px;" width="18" height="18" viewBox="0 0 18 18"><path d="M1 0.8H6.5L8.8 3.6H16V15H1Z" fill="#c4c4c4"/><circle cx="13" cy="10.6" r="5.4" fill="#242424"/><circle cx="13" cy="10.6" r="3.4" fill="none" stroke="#c4c4c4" stroke-width="1.5"/><path d="M10.6 13.3L7.6 16.8" stroke="#c4c4c4" stroke-width="1.5"/></svg>
<svg style="left:586px;top:771px;" width="12" height="11" viewBox="0 0 12 11"><path d="M4 1L1 4L4 7M1 4H8A3.2 3.2 0 0 1 8 10.4H5" fill="none" stroke="#c0c0c0" stroke-width="1.4"/></svg>
<div class="a" style="left:257px;top:808px;width:124px;height:20px;background:#0f0f0f;border:1px solid #303030;border-radius:4px"></div>
<div class="tx" style="left:266px;top:812.89px;font-size:11px;color:#e0e0e0;letter-spacing:0px;font-weight:normal;">-0.01</div>
<div class="a" style="left:257px;top:835px;width:124px;height:20px;background:#0f0f0f;border:1px solid #303030;border-radius:4px"></div>
<div class="tx" style="left:266px;top:839.89px;font-size:11px;color:#e0e0e0;letter-spacing:0px;font-weight:normal;">0.0</div>
<div class="a" style="left:257px;top:862px;width:124px;height:20px;background:#0f0f0f;border:1px solid #303030;border-radius:4px"></div>
<div class="tx" style="left:266px;top:866.89px;font-size:11px;color:#e0e0e0;letter-spacing:0px;font-weight:normal;">-0.005</div>
<div class="a" style="left:257px;top:889px;width:124px;height:20px;background:#0f0f0f;border:1px solid #303030;border-radius:4px"></div>
<div class="tx" style="left:266px;top:893.89px;font-size:11px;color:#e0e0e0;letter-spacing:0px;font-weight:normal;">0.0</div>
<div class="tx" style="left:257px;top:920.19px;font-size:11px;color:#a8a8a8;letter-spacing:0.5px;font-weight:normal;">Min</div>
<div class="a" style="left:280px;top:916px;width:98px;height:20px;background:#0f0f0f;border:1px solid #303030;border-radius:4px"></div>
<div class="tx" style="left:289px;top:920.89px;font-size:11px;color:#e0e0e0;letter-spacing:0px;font-weight:normal;">0.0</div>
<div class="tx" style="left:383px;top:920.19px;font-size:11px;color:#a8a8a8;letter-spacing:0.3px;font-weight:normal;">Max</div>
<div class="a" style="left:408px;top:916px;width:97px;height:20px;background:#0f0f0f;border:1px solid #303030;border-radius:4px"></div>
<div class="tx" style="left:417px;top:920.89px;font-size:11px;color:#e0e0e0;letter-spacing:0px;font-weight:normal;">-0.3</div>
<div class="tx" style="left:257px;top:947.19px;font-size:11px;color:#a8a8a8;letter-spacing:0.5px;font-weight:normal;">Min</div>
<div class="a" style="left:280px;top:943px;width:98px;height:20px;background:#0f0f0f;border:1px solid #303030;border-radius:4px"></div>
<div class="tx" style="left:289px;top:947.89px;font-size:11px;color:#e0e0e0;letter-spacing:0px;font-weight:normal;">-100.0</div>
<div class="tx" style="left:383px;top:947.19px;font-size:11px;color:#a8a8a8;letter-spacing:0.3px;font-weight:normal;">Max</div>
<div class="a" style="left:408px;top:943px;width:97px;height:20px;background:#0f0f0f;border:1px solid #303030;border-radius:4px"></div>
<div class="tx" style="left:417px;top:947.89px;font-size:11px;color:#e0e0e0;letter-spacing:0px;font-weight:normal;">100.0</div>
<div class="tx" style="left:257px;top:974.19px;font-size:11px;color:#c0c0c0;letter-spacing:0px;font-weight:normal;">0 Array element</div>
<svg style="left:382px;top:972px;" width="16" height="16" viewBox="0 0 16 16"><circle cx="8" cy="8" r="6.6" fill="none" stroke="#c8c8c8" stroke-width="1.5"/><path d="M8 5.2V10.8M5.2 8H10.8" stroke="#c8c8c8" stroke-width="1.9"/></svg>
<svg style="left:409px;top:971px;" width="15" height="17" viewBox="0 0 15 17"><path d="M4.3 3.2Q7.5 0.3 10.7 3.2Z" fill="#c8c8c8"/><path d="M0 4.5H15" stroke="#c8c8c8" stroke-width="2"/><path d="M3 6.5L3.5 15.6H11.5L12 6.5" fill="none" stroke="#c8c8c8" stroke-width="1.8"/></svg>
<div class="a" style="left:257px;top:998px;width:48px;height:30px;background:#1a1a1a;border:1px solid #303030;border-radius:3px"></div>
<div class="a" style="left:314px;top:997px;width:192px;height:24px;background:#0f0f0f;border:1px solid #333;border-radius:4px"></div>
<div class="tx" style="left:322.5px;top:1003.27px;font-size:11.5px;color:#d0d0d0;letter-spacing:-0.1px;font-weight:normal;">None</div>
<svg style="left:483px;top:1004px;" width="12" height="7" viewBox="0 0 12 7"><path d="M1 1L6 6L11 1" fill="none" stroke="#d0d0d0" stroke-width="1.5"/></svg>
<div class="a" style="left:3px;top:1018px;width:1526px;height:5px;background:#151515;"></div>
<div class="a" style="left:623px;top:103px;width:417px;height:36px;background:#242424;"></div>
<svg style="left:623px;top:103px;" width="9" height="9" viewBox="0 0 9 9"><path d="M0 0H8.5L0 8.5Z" fill="#0a6fe0"/></svg>
<div class="a" style="left:633px;top:109px;width:38px;height:24px;background:#363636;border-radius:5px"></div>
<svg style="left:639px;top:112px;" width="16" height="18" viewBox="0 0 16 18"><path d="M0.6 3L7.4 1V14L0.6 11.5Z" fill="#cfcfcf"/><path d="M7.4 1L11.6 3.7V7.3L7.4 5Z" fill="#8f8f8f"/><path d="M9 8.4L15 13.5L12 13.8L13.6 17L12.3 17.6L10.8 14.4L9 16.3Z" fill="#dcdcdc" stroke="#363636" stroke-width="0.8"/></svg>
<svg style="left:659.5px;top:118.5px;" width="8" height="5" viewBox="0 0 8 5"><path d="M1.2 1.3L3.7 3.6L6.2 1.3" fill="none" stroke="#c8c8c8" stroke-width="1.1"/></svg>
<div class="a" style="left:679px;top:109px;width:38px;height:24px;background:#363636;border-radius:5px"></div>
<svg style="left:684px;top:111px;" width="18" height="18" viewBox="0 0 18 18"><path d="M4.2 9.9A5.6 5.6 0 1 0 11.6 5.3" fill="none" stroke="#d8d8d8" stroke-width="2.4"/><path d="M1.6 9.6L3.6 11.2M10.2 2.5L11.2 4.7" stroke="#d8d8d8" stroke-width="2.4"/></svg>
<svg style="left:706px;top:118.5px;" width="8" height="5" viewBox="0 0 8 5"><path d="M1.2 1.3L3.7 3.6L6.2 1.3" fill="none" stroke="#c8c8c8" stroke-width="1.1"/></svg>
<div class="a" style="left:769px;top:109px;width:111px;height:24px;background:#363636;border-radius:5px"></div>
<svg style="left:775px;top:115px;" width="16" height="12" viewBox="0 0 16 12"><rect x="0" y="1" width="10" height="10" fill="#c8c8c8"/><path d="M11 6L16 1.5V10.5Z" fill="#c8c8c8"/></svg>
<div class="tx" style="left:795.3px;top:113.90px;font-size:13px;color:#d0d0d0;letter-spacing:0px;font-weight:normal;">Perspective</div>
<svg style="left:867px;top:118.5px;" width="8" height="5" viewBox="0 0 8 5"><path d="M1.2 1.3L3.7 3.6L6.2 1.3" fill="none" stroke="#c8c8c8" stroke-width="1.1"/></svg>
<div class="a" style="left:888px;top:109px;width:56px;height:24px;background:#363636;border-radius:5px"></div>
<svg style="left:894px;top:113px;" width="16" height="16" viewBox="0 0 16 16"><circle cx="8" cy="8" r="6.9" fill="#707070" stroke="#b8b8b8" stroke-width="1.1"/><path d="M2.2 9.5A6 6 0 0 0 9.5 13.8" fill="none" stroke="#d8d8d8" stroke-width="1.3"/><circle cx="10.3" cy="4.9" r="1.3" fill="#d8d8d8"/></svg>
<div class="tx" style="left:914.4px;top:113.90px;font-size:13px;color:#d0d0d0;letter-spacing:0px;font-weight:normal;">Lit</div>
<svg style="left:931.5px;top:118.5px;" width="8" height="5" viewBox="0 0 8 5"><path d="M1.2 1.3L3.7 3.6L6.2 1.3" fill="none" stroke="#c8c8c8" stroke-width="1.1"/></svg>
<div class="a" style="left:952px;top:109px;width:38px;height:24px;background:#363636;border-radius:5px"></div>
<svg style="left:958px;top:113px;" width="17" height="17" viewBox="0 0 17 17"><rect x="0.7" y="0.7" width="14" height="14" fill="none" stroke="#c8c8c8" stroke-width="1.4"/><path d="M2 14L6 7L8.5 11L10 9L12 12V14Z" fill="#9a9a9a"/><circle cx="11" cy="4.5" r="1.6" fill="#9a9a9a"/><circle cx="13" cy="13.5" r="2.6" fill="#363636" stroke="#c8c8c8" stroke-width="1.2"/></svg>
<svg style="left:978px;top:118.5px;" width="8" height="5" viewBox="0 0 8 5"><path d="M1.2 1.3L3.7 3.6L6.2 1.3" fill="none" stroke="#c8c8c8" stroke-width="1.1"/></svg>
<div class="a" style="left:998px;top:105px;width:1px;height:32px;background:#1a1a1a;"></div>
<div class="a" style="left:1000px;top:105px;width:38px;height:32px;background:#363636;"></div>
<svg style="left:1007px;top:114px;" width="14" height="13" viewBox="0 0 14 13"><path d="M0 1.5H14M0 6.5H14M0 11.5H14" stroke="#d0d0d0" stroke-width="2"/></svg>
<svg style="left:1026.5px;top:118.5px;" width="8" height="5" viewBox="0 0 8 5"><path d="M1.2 1.3L3.7 3.6L6.2 1.3" fill="none" stroke="#c8c8c8" stroke-width="1.1"/></svg>
<div class="a" style="left:623px;top:139px;width:417px;height:560px;background:#aaaaaa;overflow:hidden">
<svg style="left:0;top:0" width="417" height="560" viewBox="0 0 417 560"><defs><linearGradient id="pl" x1="0" y1="0" x2="0" y2="1"><stop offset="0" stop-color="#848c9b"/><stop offset=".12" stop-color="#9299a8"/><stop offset=".45" stop-color="#a4abb8"/><stop offset=".75" stop-color="#a1a8b4"/><stop offset="1" stop-color="#98a0ac"/></linearGradient><radialGradient id="vig" cx="0.55" cy="0.45" r="0.75"><stop offset="0.55" stop-color="#141c2c" stop-opacity="0"/><stop offset="1" stop-color="#141c2c" stop-opacity="0.12"/></radialGradient><linearGradient id="plx" x1="0" y1="0" x2="1" y2="0"><stop offset="0" stop-color="#000" stop-opacity="0.02"/><stop offset=".5" stop-color="#000" stop-opacity="0"/><stop offset="1" stop-color="#101830" stop-opacity="0.07"/></linearGradient><pattern id="grid" width="19" height="19" patternUnits="userSpaceOnUse" patternTransform="rotate(-6)"><path d="M19 0V19H0" fill="none" stroke="#000" stroke-opacity="0.02" stroke-width="1"/></pattern></defs><path d="M0 38.5L383 0L417 57V560H0Z" fill="url(#pl)"/><path d="M0 38.5L383 0L417 57V560H0Z" fill="url(#plx)"/><path d="M0 38.5L383 0L417 57V560H0Z" fill="url(#vig)"/><path d="M0 38.5L383 0L417 57V560H0Z" fill="url(#grid)"/><ellipse cx="205.9" cy="254" rx="5.3" ry="3.4" fill="none" stroke="#8490a3" stroke-width="1.2"/><path d="M202 257Q205.5 255.5 208.5 257.5L208 265L205.5 277L199.5 281L196.5 278L199.5 265Z" fill="#8995a8"/><path d="M200.5 261L195.5 271M208 261L210.5 270" stroke="#8995a8" stroke-width="1.4"/><path d="M191 274.5L204 277.5" stroke="#5e5e5e" stroke-width="1.6"/><ellipse cx="199" cy="282" rx="6" ry="4.5" fill="#7f899b"/><rect x="194" y="285" width="6" height="6" fill="#0000ff"/><rect x="190" y="282" width="6" height="6" fill="#00ff00"/><rect x="199" y="287" width="6" height="6" fill="#00ff00"/><path d="M46 514.5L68.5 512" stroke="#c41a08" stroke-width="1.6"/><path d="M46 517L49 537.5" stroke="#5aa814" stroke-width="1.6"/><rect x="43.5" y="513" width="4" height="4" fill="#909090" stroke="#333" stroke-width="1"/><path d="M42.5 501.5H48.5L42.5 510.5H48.5" fill="none" stroke="#3d80e6" stroke-width="1.6"/><path d="M78.5 505.5L85 515.5M85 505.5L78.5 515.5" stroke="#d6380e" stroke-width="1.6"/><path d="M48 545.5L51.5 550L55 545.5M51.5 550V555" fill="none" stroke="#5aa814" stroke-width="1.6"/></svg>
</div>
<div class="a" style="left:623px;top:699px;width:417px;height:56px;background:#242424;"></div>
<svg style="left:636px;top:710px;" width="15" height="18" viewBox="0 0 15 18"><rect x="0" y="1" width="3" height="16" fill="#a8a8a8"/><path d="M14 0.5V17.5L4 9Z" fill="#a8a8a8"/></svg>
<svg style="left:666px;top:710px;" width="17" height="18" viewBox="0 0 17 18"><path d="M12 0.5V17.5L1 9Z" fill="#a8a8a8"/><rect x="13.5" y="1" width="3" height="16" fill="#a8a8a8"/></svg>
<svg style="left:699px;top:710px;" width="15" height="18" viewBox="0 0 15 18"><path d="M14 0.5V17.5L0.5 9Z" fill="#a8a8a8"/></svg>
<svg style="left:732px;top:710px;" width="14" height="18" viewBox="0 0 14 18"><rect x="0.5" y="1" width="4" height="16" fill="#a8a8a8"/><rect x="9" y="1" width="4" height="16" fill="#a8a8a8"/></svg>
<svg style="left:765px;top:710px;" width="15" height="18" viewBox="0 0 15 18"><path d="M0.5 0.5V17.5L14 9Z" fill="#a8a8a8"/></svg>
<svg style="left:795px;top:710px;" width="17" height="18" viewBox="0 0 17 18"><rect x="0.5" y="1" width="3" height="16" fill="#a8a8a8"/><path d="M5 0.5V17.5L16 9Z" fill="#a8a8a8"/></svg>
<svg style="left:827px;top:710px;" width="15" height="18" viewBox="0 0 15 18"><path d="M1 0.5V17.5L11 9Z" fill="#a8a8a8"/><rect x="11.5" y="1" width="3" height="16" fill="#a8a8a8"/></svg>
<div class="a" style="left:855px;top:745px;width:185px;height:9px;background:#8e1212;"></div>
<svg style="left:855px;top:745px;" width="185" height="9" viewBox="0 0 185 9"><rect x="0.2" y="6" width="1.6" height="3" fill="#fff"/><rect x="9.6" y="6" width="1.6" height="3" fill="#fff"/><rect x="19.0" y="1" width="1.6" height="8" fill="#fff"/><rect x="28.4" y="6" width="1.6" height="3" fill="#fff"/><rect x="37.8" y="6" width="1.6" height="3" fill="#fff"/><rect x="47.2" y="6" width="1.6" height="3" fill="#fff"/><rect x="56.7" y="6" width="1.6" height="3" fill="#fff"/><rect x="66.1" y="3" width="1.6" height="6" fill="#fff"/><rect x="75.5" y="6" width="1.6" height="3" fill="#fff"/><rect x="84.9" y="6" width="1.6" height="3" fill="#fff"/><rect x="94.3" y="6" width="1.6" height="3" fill="#fff"/><rect x="103.7" y="6" width="1.6" height="3" fill="#fff"/><rect x="113.1" y="1" width="1.6" height="8" fill="#fff"/><rect x="122.5" y="6" width="1.6" height="3" fill="#fff"/><rect x="131.9" y="6" width="1.6" height="3" fill="#fff"/><rect x="141.4" y="6" width="1.6" height="3" fill="#fff"/><rect x="150.8" y="6" width="1.6" height="3" fill="#fff"/><rect x="160.2" y="3" width="1.6" height="6" fill="#fff"/><rect x="169.6" y="6" width="1.6" height="3" fill="#fff"/><rect x="179.0" y="6" width="1.6" height="3" fill="#fff"/></svg>
<div class="tx" style="left:863px;top:732.81px;font-size:10.5px;color:#d0d0d0;letter-spacing:0px;font-weight:normal;">0.00</div>
<div class="tx" style="left:957.8px;top:732.81px;font-size:10.5px;color:#d0d0d0;letter-spacing:0px;font-weight:normal;">1.00</div>
<svg style="left:1016px;top:700px;" width="12" height="54" viewBox="0 0 12 54"><path d="M0 0H11V47L5.5 53L0 47Z" fill="#c0452e" fill-opacity="0.45"/></svg>
<div class="a" style="left:1046px;top:103px;width:160px;height:25px;background:#242424;border-radius:5px 5px 0 0"></div>
<div class="tx" style="left:1072.4px;top:108.00px;font-size:13px;color:#c8c8c8;letter-spacing:-0.1px;font-weight:normal;">Asset Browser</div>
<svg style="left:1183px;top:111px;" width="8" height="8" viewBox="0 0 8 8"><path d="M1 1L7 7M7 1L1 7" stroke="#c8c8c8" stroke-width="1.5"/></svg>
<div class="a" style="left:1046px;top:127px;width:480px;height:628px;background:#242424;"></div>
<svg style="left:1056px;top:134px;" width="15" height="13" viewBox="0 0 15 13"><path d="M0 1.2H15M3 6H12M5.5 11H9.5" stroke="#c8c8c8" stroke-width="2"/></svg>
<svg style="left:1077px;top:137px;" width="11" height="7" viewBox="0 0 11 7"><path d="M1 1L5.5 5.5L10 1" fill="none" stroke="#c8c8c8" stroke-width="1.5"/></svg>
<div class="a" style="left:1096px;top:128px;width:370px;height:24px;background:#0f0f0f;border-radius:12px;border:1px solid #303030"></div>
<svg style="left:1102px;top:134px;" width="11" height="11" viewBox="0 0 11 11"><path d="M1 1L10 10M10 1L1 10" stroke="#e0e0e0" stroke-width="1.8"/></svg>
<div class="tx" style="left:1122.6px;top:132.62px;font-size:12.5px;color:#d8d8d8;letter-spacing:-0.1px;font-weight:normal;">Idle</div>
<svg style="left:1472px;top:134px;" width="18" height="14" viewBox="0 0 18 14"><path d="M0 1H6L8 3H17V13H0Z" fill="#a8a8a8"/><circle cx="8.5" cy="7" r="2" fill="#242424"/><path d="M4.5 12.5Q8.5 8 12.5 12.5Z" fill="#242424"/></svg>
<svg style="left:1497px;top:132px;" width="16" height="16" viewBox="0 0 16 16"><path d="M8 0.8V15.2M0.8 8H15.2M2.9 2.9L13.1 13.1M2.9 13.1L13.1 2.9" stroke="#c8c8c8" stroke-width="2.4"/><circle cx="8" cy="8" r="5.2" fill="#c8c8c8"/><circle cx="8" cy="8" r="3.5" fill="#242424"/><circle cx="8" cy="8" r="2.2" fill="none" stroke="#a0a0a0" stroke-width="1"/></svg>
<div class="a" style="left:1051px;top:160px;width:468px;height:594px;background:#1a1a1a;"></div>
<div class="a" style="left:1051px;top:160px;width:452px;height:24px;background:#2f2f2f;"></div>
<div class="a" style="left:1081px;top:160px;width:1px;height:24px;background:#1f1f1f;"></div>
<div class="a" style="left:1356px;top:160px;width:1px;height:24px;background:#1f1f1f;"></div>
<svg style="left:1058px;top:164px;" width="16" height="16" viewBox="0 0 16 16"><circle cx="4" cy="3.1" r="2.3" fill="#c8c8c8"/><circle cx="12" cy="3.1" r="2.3" fill="#c8c8c8"/><circle cx="4" cy="13" r="2.3" fill="#c8c8c8"/><path d="M4 3V13M12 3.5Q12 8.2 4 8.6" fill="none" stroke="#c8c8c8" stroke-width="1.3"/></svg>
<div class="tx" style="left:1086.4px;top:165.62px;font-size:12.5px;color:#c8c8c8;letter-spacing:-0.1px;font-weight:normal;">Name</div>
<svg style="left:1126px;top:169px;" width="9" height="5" viewBox="0 0 9 5"><path d="M0 5L4.5 0L9 5Z" fill="#c8c8c8"/></svg>
<div class="tx" style="left:1361.5px;top:165.62px;font-size:12.5px;color:#c8c8c8;letter-spacing:-0.1px;font-weight:normal;">Path</div>
<svg style="left:1392px;top:169px;" width="9" height="5" viewBox="0 0 9 5"><path d="M0 5L4.5 0L9 5Z" fill="#c8c8c8"/></svg>
<div class="a" style="left:1051px;top:184px;width:456px;height:570px;overflow:hidden">
<div class="a" style="left:0;top:-1.3px;width:456px;height:22px;background:#151515"></div>
<svg style="left:42px;top:1.2px" width="16" height="19" viewBox="0 0 16 19"><path d="M1.8 0.5H8.3L15.5 7.7V17A1.5 1.5 0 0 1 14 18.5H2A1.5 1.5 0 0 1 0.5 17V1.8A1.3 1.3 0 0 1 1.8 0.5Z" fill="#4b8047"/><path d="M8.8 0.5V7.2H15.5" fill="none" stroke="#161616" stroke-width="0.9"/><path d="M9.3 1.3V6.7H14.7Z" fill="#4b8047"/></svg>
<div class="tx" style="left:66px;top:4.2px;font-size:12.5px;letter-spacing:-0.4px;color:#c8c8c8"><span style="background:#7ab83a;color:#111;padding:0">Idle</span>_Long</div>
<div class="tx" style="left:316px;top:4.2px;font-size:12.5px;letter-spacing:0.5px;color:#c8c8c8">/All/Game/<span style="letter-spacing:-0.6px">...</span>nimations/</div>
<div class="a" style="left:0;top:20.7px;width:456px;height:22px;background:#1a1a1a"></div>
<svg style="left:42px;top:23.2px" width="16" height="19" viewBox="0 0 16 19"><path d="M1.8 0.5H8.3L15.5 7.7V17A1.5 1.5 0 0 1 14 18.5H2A1.5 1.5 0 0 1 0.5 17V1.8A1.3 1.3 0 0 1 1.8 0.5Z" fill="#4b8047"/><path d="M8.8 0.5V7.2H15.5" fill="none" stroke="#161616" stroke-width="0.9"/><path d="M9.3 1.3V6.7H14.7Z" fill="#4b8047"/></svg>
<div class="tx" style="left:66px;top:26.2px;font-size:12.5px;letter-spacing:-0.4px;color:#c8c8c8"><span style="background:#7ab83a;color:#111;padding:0">Idle</span>_Relaxed</div>
<div class="tx" style="left:316px;top:26.2px;font-size:12.5px;letter-spacing:0.5px;color:#c8c8c8">/All/Game/<span style="letter-spacing:-0.6px">...</span>nimations/</div>
<div class="a" style="left:0;top:42.7px;width:456px;height:22px;background:#151515"></div>
<svg style="left:42px;top:45.2px" width="16" height="19" viewBox="0 0 16 19"><path d="M1.8 0.5H8.3L15.5 7.7V17A1.5 1.5 0 0 1 14 18.5H2A1.5 1.5 0 0 1 0.5 17V1.8A1.3 1.3 0 0 1 1.8 0.5Z" fill="#4b8047"/><path d="M8.8 0.5V7.2H15.5" fill="none" stroke="#161616" stroke-width="0.9"/><path d="M9.3 1.3V6.7H14.7Z" fill="#4b8047"/></svg>
<div class="tx" style="left:66px;top:48.2px;font-size:12.5px;letter-spacing:-0.4px;color:#c8c8c8"><span style="background:#7ab83a;color:#111;padding:0">Idle</span>_to_Run_Bwd</div>
<div class="tx" style="left:316px;top:48.2px;font-size:12.5px;letter-spacing:0.5px;color:#c8c8c8">/All/Game/<span style="letter-spacing:-0.6px">...</span>nimations/</div>
<div class="a" style="left:0;top:64.7px;width:456px;height:22px;background:#1a1a1a"></div>
<svg style="left:42px;top:67.2px" width="16" height="19" viewBox="0 0 16 19"><path d="M1.8 0.5H8.3L15.5 7.7V17A1.5 1.5 0 0 1 14 18.5H2A1.5 1.5 0 0 1 0.5 17V1.8A1.3 1.3 0 0 1 1.8 0.5Z" fill="#4b8047"/><path d="M8.8 0.5V7.2H15.5" fill="none" stroke="#161616" stroke-width="0.9"/><path d="M9.3 1.3V6.7H14.7Z" fill="#4b8047"/></svg>
<div class="tx" style="left:66px;top:70.2px;font-size:12.5px;letter-spacing:-0.4px;color:#c8c8c8"><span style="background:#7ab83a;color:#111;padding:0">Idle</span>_to_Run_Fwd</div>
<div class="tx" style="left:316px;top:70.2px;font-size:12.5px;letter-spacing:0.5px;color:#c8c8c8">/All/Game/<span style="letter-spacing:-0.6px">...</span>nimations/</div>
<div class="a" style="left:0;top:86.7px;width:456px;height:22px;background:#151515"></div>
<svg style="left:42px;top:89.2px" width="16" height="19" viewBox="0 0 16 19"><path d="M1.8 0.5H8.3L15.5 7.7V17A1.5 1.5 0 0 1 14 18.5H2A1.5 1.5 0 0 1 0.5 17V1.8A1.3 1.3 0 0 1 1.8 0.5Z" fill="#4b8047"/><path d="M8.8 0.5V7.2H15.5" fill="none" stroke="#161616" stroke-width="0.9"/><path d="M9.3 1.3V6.7H14.7Z" fill="#4b8047"/></svg>
<div class="tx" style="left:66px;top:92.2px;font-size:12.5px;letter-spacing:-0.4px;color:#c8c8c8"><span style="background:#7ab83a;color:#111;padding:0">Idle</span>_to_Run_Lft</div>
<div class="tx" style="left:316px;top:92.2px;font-size:12.5px;letter-spacing:0.5px;color:#c8c8c8">/All/Game/<span style="letter-spacing:-0.6px">...</span>nimations/</div>
<div class="a" style="left:0;top:108.7px;width:456px;height:22px;background:#1a1a1a"></div>
<svg style="left:42px;top:111.2px" width="16" height="19" viewBox="0 0 16 19"><path d="M1.8 0.5H8.3L15.5 7.7V17A1.5 1.5 0 0 1 14 18.5H2A1.5 1.5 0 0 1 0.5 17V1.8A1.3 1.3 0 0 1 1.8 0.5Z" fill="#4b8047"/><path d="M8.8 0.5V7.2H15.5" fill="none" stroke="#161616" stroke-width="0.9"/><path d="M9.3 1.3V6.7H14.7Z" fill="#4b8047"/></svg>
<div class="tx" style="left:66px;top:114.2px;font-size:12.5px;letter-spacing:-0.4px;color:#c8c8c8"><span style="background:#7ab83a;color:#111;padding:0">Idle</span>_to_Run_Rt</div>
<div class="tx" style="left:316px;top:114.2px;font-size:12.5px;letter-spacing:0.5px;color:#c8c8c8">/All/Game/<span style="letter-spacing:-0.6px">...</span>nimations/</div>
<div class="a" style="left:0;top:130.7px;width:456px;height:22px;background:#151515"></div>
<svg style="left:42px;top:133.2px" width="16" height="19" viewBox="0 0 16 19"><path d="M1.8 0.5H8.3L15.5 7.7V17A1.5 1.5 0 0 1 14 18.5H2A1.5 1.5 0 0 1 0.5 17V1.8A1.3 1.3 0 0 1 1.8 0.5Z" fill="#4b8047"/><path d="M8.8 0.5V7.2H15.5" fill="none" stroke="#161616" stroke-width="0.9"/><path d="M9.3 1.3V6.7H14.7Z" fill="#4b8047"/></svg>
<div class="tx" style="left:66px;top:136.2px;font-size:12.5px;letter-spacing:-0.4px;color:#c8c8c8"><span style="background:#7ab83a;color:#111;padding:0">Idle</span>Pose_Zero_Additive_TravelMode</div>
<div class="tx" style="left:316px;top:136.2px;font-size:12.5px;letter-spacing:0.5px;color:#c8c8c8">/All/Game/<span style="letter-spacing:-0.6px">...</span>nimations/</div>
<div class="a" style="left:0;top:152.7px;width:456px;height:22px;background:#1a1a1a"></div>
<svg style="left:42px;top:155.2px" width="16" height="19" viewBox="0 0 16 19"><path d="M1.8 0.5H8.3L15.5 7.7V17A1.5 1.5 0 0 1 14 18.5H2A1.5 1.5 0 0 1 0.5 17V1.8A1.3 1.3 0 0 1 1.8 0.5Z" fill="#4b8047"/><path d="M8.8 0.5V7.2H15.5" fill="none" stroke="#161616" stroke-width="0.9"/><path d="M9.3 1.3V6.7H14.7Z" fill="#4b8047"/></svg>
<div class="tx" style="left:66px;top:158.2px;font-size:12.5px;letter-spacing:-0.4px;color:#c8c8c8">Jump_<span style="background:#7ab83a;color:#111;padding:0">Idle</span>_Land</div>
<div class="tx" style="left:316px;top:158.2px;font-size:12.5px;letter-spacing:0.35px;color:#c8c8c8">/All/Game/<span style="letter-spacing:-0.6px">...</span>ions/Jump_</div>
<div class="a" style="left:0;top:174.7px;width:456px;height:22px;background:#151515"></div>
<svg style="left:42px;top:177.2px" width="16" height="19" viewBox="0 0 16 19"><path d="M1.8 0.5H8.3L15.5 7.7V17A1.5 1.5 0 0 1 14 18.5H2A1.5 1.5 0 0 1 0.5 17V1.8A1.3 1.3 0 0 1 1.8 0.5Z" fill="#4b8047"/><path d="M8.8 0.5V7.2H15.5" fill="none" stroke="#161616" stroke-width="0.9"/><path d="M9.3 1.3V6.7H14.7Z" fill="#4b8047"/></svg>
<div class="tx" style="left:66px;top:180.2px;font-size:12.5px;letter-spacing:-0.4px;color:#c8c8c8">Jump_<span style="background:#7ab83a;color:#111;padding:0">Idle</span>_Loop</div>
<div class="tx" style="left:316px;top:180.2px;font-size:12.5px;letter-spacing:0.35px;color:#c8c8c8">/All/Game/<span style="letter-spacing:-0.6px">...</span>ions/Jump_</div>
<div class="a" style="left:0;top:196.7px;width:456px;height:22px;background:#1a1a1a"></div>
<svg style="left:42px;top:199.2px" width="16" height="19" viewBox="0 0 16 19"><path d="M1.8 0.5H8.3L15.5 7.7V17A1.5 1.5 0 0 1 14 18.5H2A1.5 1.5 0 0 1 0.5 17V1.8A1.3 1.3 0 0 1 1.8 0.5Z" fill="#4b8047"/><path d="M8.8 0.5V7.2H15.5" fill="none" stroke="#161616" stroke-width="0.9"/><path d="M9.3 1.3V6.7H14.7Z" fill="#4b8047"/></svg>
<div class="tx" style="left:66px;top:202.2px;font-size:12.5px;letter-spacing:-0.4px;color:#c8c8c8">Jump_<span style="background:#7ab83a;color:#111;padding:0">Idle</span>_Loop_Pose</div>
<div class="tx" style="left:316px;top:202.2px;font-size:12.5px;letter-spacing:0.35px;color:#c8c8c8">/All/Game/<span style="letter-spacing:-0.6px">...</span>ions/Jump_</div>
<div class="a" style="left:0;top:218.7px;width:456px;height:22px;background:#151515"></div>
<svg style="left:42px;top:221.2px" width="16" height="19" viewBox="0 0 16 19"><path d="M1.8 0.5H8.3L15.5 7.7V17A1.5 1.5 0 0 1 14 18.5H2A1.5 1.5 0 0 1 0.5 17V1.8A1.3 1.3 0 0 1 1.8 0.5Z" fill="#ffb47c"/><path d="M8.8 0.5V7.2H15.5" fill="none" stroke="#161616" stroke-width="0.9"/><path d="M9.3 1.3V6.7H14.7Z" fill="#ffb47c"/></svg>
<div class="tx" style="left:66px;top:224.2px;font-size:12.5px;letter-spacing:-0.4px;color:#c8c8c8">Jump_<span style="background:#7ab83a;color:#111;padding:0">Idle</span>_Preland</div>
<div class="tx" style="left:316px;top:224.2px;font-size:12.5px;letter-spacing:0.35px;color:#c8c8c8">/All/Game<span style="letter-spacing:-0.6px">...</span>aces/Jump_</div>
<div class="a" style="left:0;top:240.7px;width:456px;height:22px;background:#1a1a1a"></div>
<svg style="left:42px;top:243.2px" width="16" height="19" viewBox="0 0 16 19"><path d="M1.8 0.5H8.3L15.5 7.7V17A1.5 1.5 0 0 1 14 18.5H2A1.5 1.5 0 0 1 0.5 17V1.8A1.3 1.3 0 0 1 1.8 0.5Z" fill="#4b8047"/><path d="M8.8 0.5V7.2H15.5" fill="none" stroke="#161616" stroke-width="0.9"/><path d="M9.3 1.3V6.7H14.7Z" fill="#4b8047"/></svg>
<div class="tx" style="left:66px;top:246.2px;font-size:12.5px;letter-spacing:-0.4px;color:#c8c8c8">Jump_<span style="background:#7ab83a;color:#111;padding:0">Idle</span>_Preland_Pose</div>
<div class="tx" style="left:316px;top:246.2px;font-size:12.5px;letter-spacing:0.35px;color:#c8c8c8">/All/Game/<span style="letter-spacing:-0.6px">...</span>ions/Jump_</div>
<div class="a" style="left:0;top:262.7px;width:456px;height:22px;background:#151515"></div>
<svg style="left:42px;top:265.2px" width="16" height="19" viewBox="0 0 16 19"><path d="M1.8 0.5H8.3L15.5 7.7V17A1.5 1.5 0 0 1 14 18.5H2A1.5 1.5 0 0 1 0.5 17V1.8A1.3 1.3 0 0 1 1.8 0.5Z" fill="#4b8047"/><path d="M8.8 0.5V7.2H15.5" fill="none" stroke="#161616" stroke-width="0.9"/><path d="M9.3 1.3V6.7H14.7Z" fill="#4b8047"/></svg>
<div class="tx" style="left:66px;top:268.2px;font-size:12.5px;letter-spacing:-0.4px;color:#c8c8c8">Jump_<span style="background:#7ab83a;color:#111;padding:0">Idle</span>_Start</div>
<div class="tx" style="left:316px;top:268.2px;font-size:12.5px;letter-spacing:0.35px;color:#c8c8c8">/All/Game/<span style="letter-spacing:-0.6px">...</span>ions/Jump_</div>
<div class="a" style="left:0;top:284.7px;width:456px;height:22px;background:#1a1a1a"></div>
<svg style="left:42px;top:287.2px" width="16" height="19" viewBox="0 0 16 19"><path d="M1.8 0.5H8.3L15.5 7.7V17A1.5 1.5 0 0 1 14 18.5H2A1.5 1.5 0 0 1 0.5 17V1.8A1.3 1.3 0 0 1 1.8 0.5Z" fill="#4b8047"/><path d="M8.8 0.5V7.2H15.5" fill="none" stroke="#161616" stroke-width="0.9"/><path d="M9.3 1.3V6.7H14.7Z" fill="#4b8047"/></svg>
<div class="tx" style="left:66px;top:290.2px;font-size:12.5px;letter-spacing:-0.52px;color:#c8c8c8">M_Neutral_Crouch_<span style="background:#7ab83a;color:#111;padding:0">Idle</span>_Turn_045_L</div>
<div class="tx" style="left:316px;top:290.2px;font-size:12.5px;letter-spacing:0.25px;color:#c8c8c8">/All/Game/<span style="letter-spacing:-0.6px">...</span>al_Crouch_</div>
<div class="a" style="left:0;top:306.7px;width:456px;height:22px;background:#151515"></div>
<svg style="left:42px;top:309.2px" width="16" height="19" viewBox="0 0 16 19"><path d="M1.8 0.5H8.3L15.5 7.7V17A1.5 1.5 0 0 1 14 18.5H2A1.5 1.5 0 0 1 0.5 17V1.8A1.3 1.3 0 0 1 1.8 0.5Z" fill="#4b8047"/><path d="M8.8 0.5V7.2H15.5" fill="none" stroke="#161616" stroke-width="0.9"/><path d="M9.3 1.3V6.7H14.7Z" fill="#4b8047"/></svg>
<div class="tx" style="left:66px;top:312.2px;font-size:12.5px;letter-spacing:-0.52px;color:#c8c8c8">M_Neutral_Crouch_<span style="background:#7ab83a;color:#111;padding:0">Idle</span>_Turn_045_R</div>
<div class="tx" style="left:316px;top:312.2px;font-size:12.5px;letter-spacing:0.25px;color:#c8c8c8">/All/Game/<span style="letter-spacing:-0.6px">...</span>al_Crouch_</div>
<div class="a" style="left:0;top:328.7px;width:456px;height:22px;background:#1a1a1a"></div>
<svg style="left:42px;top:331.2px" width="16" height="19" viewBox="0 0 16 19"><path d="M1.8 0.5H8.3L15.5 7.7V17A1.5 1.5 0 0 1 14 18.5H2A1.5 1.5 0 0 1 0.5 17V1.8A1.3 1.3 0 0 1 1.8 0.5Z" fill="#4b8047"/><path d="M8.8 0.5V7.2H15.5" fill="none" stroke="#161616" stroke-width="0.9"/><path d="M9.3 1.3V6.7H14.7Z" fill="#4b8047"/></svg>
<div class="tx" style="left:66px;top:334.2px;font-size:12.5px;letter-spacing:-0.52px;color:#c8c8c8">M_Neutral_Crouch_<span style="background:#7ab83a;color:#111;padding:0">Idle</span>_Turn_090_L</div>
<div class="tx" style="left:316px;top:334.2px;font-size:12.5px;letter-spacing:0.25px;color:#c8c8c8">/All/Game/<span style="letter-spacing:-0.6px">...</span>al_Crouch_</div>
<div class="a" style="left:0;top:350.7px;width:456px;height:22px;background:#151515"></div>
<svg style="left:42px;top:353.2px" width="16" height="19" viewBox="0 0 16 19"><path d="M1.8 0.5H8.3L15.5 7.7V17A1.5 1.5 0 0 1 14 18.5H2A1.5 1.5 0 0 1 0.5 17V1.8A1.3 1.3 0 0 1 1.8 0.5Z" fill="#4b8047"/><path d="M8.8 0.5V7.2H15.5" fill="none" stroke="#161616" stroke-width="0.9"/><path d="M9.3 1.3V6.7H14.7Z" fill="#4b8047"/></svg>
<div class="tx" style="left:66px;top:356.2px;font-size:12.5px;letter-spacing:-0.52px;color:#c8c8c8">M_Neutral_Crouch_<span style="background:#7ab83a;color:#111;padding:0">Idle</span>_Turn_090_R</div>
<div class="tx" style="left:316px;top:356.2px;font-size:12.5px;letter-spacing:0.25px;color:#c8c8c8">/All/Game/<span style="letter-spacing:-0.6px">...</span>al_Crouch_</div>
<div class="a" style="left:0;top:372.7px;width:456px;height:22px;background:#1a1a1a"></div>
<svg style="left:42px;top:375.2px" width="16" height="19" viewBox="0 0 16 19"><path d="M1.8 0.5H8.3L15.5 7.7V17A1.5 1.5 0 0 1 14 18.5H2A1.5 1.5 0 0 1 0.5 17V1.8A1.3 1.3 0 0 1 1.8 0.5Z" fill="#4b8047"/><path d="M8.8 0.5V7.2H15.5" fill="none" stroke="#161616" stroke-width="0.9"/><path d="M9.3 1.3V6.7H14.7Z" fill="#4b8047"/></svg>
<div class="tx" style="left:66px;top:378.2px;font-size:12.5px;letter-spacing:-0.52px;color:#c8c8c8">M_Neutral_Crouch_<span style="background:#7ab83a;color:#111;padding:0">Idle</span>_Turn_135_L</div>
<div class="tx" style="left:316px;top:378.2px;font-size:12.5px;letter-spacing:0.25px;color:#c8c8c8">/All/Game/<span style="letter-spacing:-0.6px">...</span>al_Crouch_</div>
<div class="a" style="left:0;top:394.7px;width:456px;height:22px;background:#151515"></div>
<svg style="left:42px;top:397.2px" width="16" height="19" viewBox="0 0 16 19"><path d="M1.8 0.5H8.3L15.5 7.7V17A1.5 1.5 0 0 1 14 18.5H2A1.5 1.5 0 0 1 0.5 17V1.8A1.3 1.3 0 0 1 1.8 0.5Z" fill="#4b8047"/><path d="M8.8 0.5V7.2H15.5" fill="none" stroke="#161616" stroke-width="0.9"/><path d="M9.3 1.3V6.7H14.7Z" fill="#4b8047"/></svg>
<div class="tx" style="left:66px;top:400.2px;font-size:12.5px;letter-spacing:-0.52px;color:#c8c8c8">M_Neutral_Crouch_<span style="background:#7ab83a;color:#111;padding:0">Idle</span>_Turn_135_R</div>
<div class="tx" style="left:316px;top:400.2px;font-size:12.5px;letter-spacing:0.25px;color:#c8c8c8">/All/Game/<span style="letter-spacing:-0.6px">...</span>al_Crouch_</div>
<div class="a" style="left:0;top:416.7px;width:456px;height:22px;background:#1a1a1a"></div>
<svg style="left:42px;top:419.2px" width="16" height="19" viewBox="0 0 16 19"><path d="M1.8 0.5H8.3L15.5 7.7V17A1.5 1.5 0 0 1 14 18.5H2A1.5 1.5 0 0 1 0.5 17V1.8A1.3 1.3 0 0 1 1.8 0.5Z" fill="#4b8047"/><path d="M8.8 0.5V7.2H15.5" fill="none" stroke="#161616" stroke-width="0.9"/><path d="M9.3 1.3V6.7H14.7Z" fill="#4b8047"/></svg>
<div class="tx" style="left:66px;top:422.2px;font-size:12.5px;letter-spacing:-0.52px;color:#c8c8c8">M_Neutral_Crouch_<span style="background:#7ab83a;color:#111;padding:0">Idle</span>_Turn_180_L</div>
<div class="tx" style="left:316px;top:422.2px;font-size:12.5px;letter-spacing:0.25px;color:#c8c8c8">/All/Game/<span style="letter-spacing:-0.6px">...</span>al_Crouch_</div>
<div class="a" style="left:0;top:438.7px;width:456px;height:22px;background:#151515"></div>
<svg style="left:42px;top:441.2px" width="16" height="19" viewBox="0 0 16 19"><path d="M1.8 0.5H8.3L15.5 7.7V17A1.5 1.5 0 0 1 14 18.5H2A1.5 1.5 0 0 1 0.5 17V1.8A1.3 1.3 0 0 1 1.8 0.5Z" fill="#4b8047"/><path d="M8.8 0.5V7.2H15.5" fill="none" stroke="#161616" stroke-width="0.9"/><path d="M9.3 1.3V6.7H14.7Z" fill="#4b8047"/></svg>
<div class="tx" style="left:66px;top:444.2px;font-size:12.5px;letter-spacing:-0.52px;color:#c8c8c8">M_Neutral_Crouch_<span style="background:#7ab83a;color:#111;padding:0">Idle</span>_Turn_180_R</div>
<div class="tx" style="left:316px;top:444.2px;font-size:12.5px;letter-spacing:0.25px;color:#c8c8c8">/All/Game/<span style="letter-spacing:-0.6px">...</span>al_Crouch_</div>
<div class="a" style="left:0;top:460.7px;width:456px;height:22px;background:#3e5370"></div>
<svg style="left:42px;top:463.2px" width="16" height="19" viewBox="0 0 16 19"><path d="M1.8 0.5H8.3L15.5 7.7V17A1.5 1.5 0 0 1 14 18.5H2A1.5 1.5 0 0 1 0.5 17V1.8A1.3 1.3 0 0 1 1.8 0.5Z" fill="#4b8047"/><path d="M8.8 0.5V7.2H15.5" fill="none" stroke="#161616" stroke-width="0.9"/><path d="M9.3 1.3V6.7H14.7Z" fill="#4b8047"/></svg>
<div class="tx" style="left:66px;top:466.2px;font-size:12.5px;letter-spacing:-0.52px;color:#101010">M_Neutral_Stand_<span style="background:#7ab83a;color:#111;padding:0">Idle</span>_Break_v01</div>
<div class="tx" style="left:316px;top:466.2px;font-size:12.5px;letter-spacing:0.5px;color:#101010">/All/Game/<span style="letter-spacing:-0.6px">...</span>nimations/</div>
<div class="a" style="left:0;top:482.7px;width:456px;height:22px;background:#3e5370"></div>
<svg style="left:42px;top:485.2px" width="16" height="19" viewBox="0 0 16 19"><path d="M1.8 0.5H8.3L15.5 7.7V17A1.5 1.5 0 0 1 14 18.5H2A1.5 1.5 0 0 1 0.5 17V1.8A1.3 1.3 0 0 1 1.8 0.5Z" fill="#4b8047"/><path d="M8.8 0.5V7.2H15.5" fill="none" stroke="#161616" stroke-width="0.9"/><path d="M9.3 1.3V6.7H14.7Z" fill="#4b8047"/></svg>
<div class="tx" style="left:66px;top:488.2px;font-size:12.5px;letter-spacing:-0.52px;color:#101010">M_Neutral_Stand_<span style="background:#7ab83a;color:#111;padding:0">Idle</span>_Break_v02</div>
<div class="tx" style="left:316px;top:488.2px;font-size:12.5px;letter-spacing:0.5px;color:#101010">/All/Game/<span style="letter-spacing:-0.6px">...</span>nimations/</div>
<div class="a" style="left:0;top:504.7px;width:456px;height:22px;background:#3e5370"></div>
<svg style="left:42px;top:507.2px" width="16" height="19" viewBox="0 0 16 19"><path d="M1.8 0.5H8.3L15.5 7.7V17A1.5 1.5 0 0 1 14 18.5H2A1.5 1.5 0 0 1 0.5 17V1.8A1.3 1.3 0 0 1 1.8 0.5Z" fill="#4b8047"/><path d="M8.8 0.5V7.2H15.5" fill="none" stroke="#161616" stroke-width="0.9"/><path d="M9.3 1.3V6.7H14.7Z" fill="#4b8047"/></svg>
<div class="tx" style="left:66px;top:510.2px;font-size:12.5px;letter-spacing:-0.52px;color:#101010">M_Neutral_Stand_<span style="background:#7ab83a;color:#111;padding:0">Idle</span>_Break_v03</div>
<div class="tx" style="left:316px;top:510.2px;font-size:12.5px;letter-spacing:0.5px;color:#101010">/All/Game/<span style="letter-spacing:-0.6px">...</span>nimations/</div>
<div class="a" style="left:0;top:526.7px;width:456px;height:22px;background:#3e5370"></div>
<svg style="left:42px;top:529.2px" width="16" height="19" viewBox="0 0 16 19"><path d="M1.8 0.5H8.3L15.5 7.7V17A1.5 1.5 0 0 1 14 18.5H2A1.5 1.5 0 0 1 0.5 17V1.8A1.3 1.3 0 0 1 1.8 0.5Z" fill="#4b8047"/><path d="M8.8 0.5V7.2H15.5" fill="none" stroke="#161616" stroke-width="0.9"/><path d="M9.3 1.3V6.7H14.7Z" fill="#4b8047"/></svg>
<div class="tx" style="left:66px;top:532.2px;font-size:12.5px;letter-spacing:-0.52px;color:#101010">M_Neutral_Stand_<span style="background:#7ab83a;color:#111;padding:0">Idle</span>_Break_v04</div>
<div class="tx" style="left:316px;top:532.2px;font-size:12.5px;letter-spacing:0.5px;color:#101010">/All/Game/<span style="letter-spacing:-0.6px">...</span>nimations/</div>
<div class="a" style="left:0;top:548.7px;width:456px;height:22px;background:#3e5370"></div>
<svg style="left:42px;top:551.2px" width="16" height="19" viewBox="0 0 16 19"><path d="M1.8 0.5H8.3L15.5 7.7V17A1.5 1.5 0 0 1 14 18.5H2A1.5 1.5 0 0 1 0.5 17V1.8A1.3 1.3 0 0 1 1.8 0.5Z" fill="#4b8047"/><path d="M8.8 0.5V7.2H15.5" fill="none" stroke="#161616" stroke-width="0.9"/><path d="M9.3 1.3V6.7H14.7Z" fill="#4b8047"/></svg>
<div class="tx" style="left:66px;top:554.2px;font-size:12.5px;letter-spacing:-0.52px;color:#101010">M_Neutral_Stand_<span style="background:#7ab83a;color:#111;padding:0">Idle</span>_Break_v06</div>
<div class="tx" style="left:316px;top:554.2px;font-size:12.5px;letter-spacing:0.5px;color:#101010">/All/Game/<span style="letter-spacing:-0.6px">...</span>nimations/</div>
</div>
<div class="a" style="left:1509px;top:230px;width:8px;height:376px;background:#4e4e4e;border-radius:4px"></div>
<div class="a" style="left:620px;top:755px;width:906px;height:28px;background:#151515;"></div>
<svg style="left:628px;top:763px;" width="16" height="15" viewBox="0 0 16 15"><rect x="0.6" y="0.6" width="6.8" height="6.3" rx="1" fill="#c4c4c4"/><rect x="10.5" y="3" width="4.7" height="3" rx=".8" fill="#c4c4c4"/><rect x="1.4" y="10" width="4.4" height="3.5" rx=".8" fill="#c4c4c4"/><rect x="10" y="9.2" width="5.2" height="4" rx=".8" fill="#c4c4c4"/><path d="M7 4.5H10.5M3.4 7V10M6 6.3L10.6 10.4" stroke="#c4c4c4" stroke-width="1"/></svg>
<div class="tx" style="left:650.5px;top:764.40px;font-size:13px;color:#c0c0c0;letter-spacing:-0.25px;font-weight:normal;">Statisti…Overview</div>
<svg style="left:789px;top:763px;" width="16" height="15" viewBox="0 0 16 15"><path d="M1 1.5H7M1 4H4.5M9 9.5H15M10 12H15M6.5 14.5H15" stroke="#7a7a7a" stroke-width="0.9"/><path d="M0.8 14.2L2.4 9.6L10.2 1.8L13.2 4.8L5.4 12.6Z" fill="#c8c8c8"/><path d="M11 1L12.2 -0.2L15.2 2.8L14 4Z" fill="#c8c8c8"/></svg>
<div class="tx" style="left:812px;top:764.40px;font-size:13px;color:#c0c0c0;letter-spacing:-0.25px;font-weight:normal;">Preview…Settings</div>
<div class="a" style="left:947px;top:759px;width:160px;height:24px;background:#242424;border-radius:5px 5px 0 0"></div>
<svg style="left:953px;top:763px;" width="16" height="15" viewBox="0 0 16 15"><rect x="0.6" y="0.6" width="6.8" height="6.3" rx="1" fill="#c4c4c4"/><rect x="10.5" y="3" width="4.7" height="3" rx=".8" fill="#c4c4c4"/><rect x="1.4" y="10" width="4.4" height="3.5" rx=".8" fill="#c4c4c4"/><rect x="10" y="9.2" width="5.2" height="4" rx=".8" fill="#c4c4c4"/><path d="M7 4.5H10.5M3.4 7V10M6 6.3L10.6 10.4" stroke="#c4c4c4" stroke-width="1"/></svg>
<div class="tx" style="left:974.3px;top:763.80px;font-size:13px;color:#c8c8c8;letter-spacing:-0.2px;font-weight:normal;">Data Details</div>
<svg style="left:1085px;top:767px;" width="8" height="8" viewBox="0 0 8 8"><path d="M1 1L7 7M7 1L1 7" stroke="#c8c8c8" stroke-width="1.5"/></svg>
<svg style="left:1115px;top:763px;" width="16" height="15" viewBox="0 0 16 15"><rect x="0.6" y="0.6" width="6.8" height="6.3" rx="1" fill="#c4c4c4"/><rect x="10.5" y="3" width="4.7" height="3" rx=".8" fill="#c4c4c4"/><rect x="1.4" y="10" width="4.4" height="3.5" rx=".8" fill="#c4c4c4"/><rect x="10" y="9.2" width="5.2" height="4" rx=".8" fill="#c4c4c4"/><path d="M7 4.5H10.5M3.4 7V10M6 6.3L10.6 10.4" stroke="#c4c4c4" stroke-width="1"/></svg>
<div class="tx" style="left:1136.5px;top:764.00px;font-size:13px;color:#c0c0c0;letter-spacing:-0.15px;font-weight:normal;">Selection Details</div>
<div class="a" style="left:620px;top:783px;width:906px;height:235px;background:#242424;"></div>
<div class="a" style="left:623px;top:784px;width:900px;height:234px;background:#1a1a1a;"></div>
<div class="a" style="left:623px;top:784px;width:900px;height:24px;background:#2f2f2f;"></div>
<div class="a" style="left:751px;top:784px;width:1px;height:24px;background:#1f1f1f;"></div>
<div class="a" style="left:816px;top:784px;width:1px;height:24px;background:#1f1f1f;"></div>
<div class="a" style="left:881px;top:784px;width:1px;height:24px;background:#1f1f1f;"></div>
<div class="tx" style="left:627px;top:789.74px;font-size:12px;color:#c0c0c0;letter-spacing:0.1px;font-weight:normal;">Channel Name</div>
<div class="a" style="left:752px;top:784px;width:64px;height:24px;overflow:hidden">
<div class="tx" style="left:5px;top:5.7px;font-size:12px;color:#c0c0c0;letter-spacing:0.1px">Data Offset</div></div>
<div class="tx" style="left:820px;top:789.74px;font-size:12px;color:#c0c0c0;letter-spacing:0.1px;font-weight:normal;">Weight</div>
<div class="tx" style="left:886px;top:789.74px;font-size:12px;color:#c0c0c0;letter-spacing:0.3px;font-weight:normal;">M_Neutral_Walk_Stop_F_Lfoot</div>
<svg style="left:628px;top:813.5px;" width="7" height="10" viewBox="0 0 7 10"><path d="M0.5 0.5L6.5 5L0.5 9.5Z" fill="#808080"/></svg>
<div class="tx" style="left:643.5px;top:812.84px;font-size:12px;color:#c8c8c8;letter-spacing:0.1px;font-weight:normal;">Traj</div>
<div class="tx" style="left:752.7px;top:812.84px;font-size:12px;color:#c8c8c8;letter-spacing:0.1px;font-weight:normal;">0</div>
<div class="tx" style="left:816.5px;top:812.84px;font-size:12px;color:#c8c8c8;letter-spacing:0.1px;font-weight:normal;">0.895</div>
<div class="tx" style="left:881.4px;top:813.01px;font-size:11.8px;color:#c8c8c8;letter-spacing:0px;font-weight:normal;">0.0, 0.0, 0.0, 0.0, 1.0, 0.0, 0.0, 0.0, 1.0, 0.0, 0.0, 0.0, 0.0, 0.0, 1.0, 0.0</div>
<svg style="left:628px;top:830.3px;" width="7" height="10" viewBox="0 0 7 10"><path d="M0.5 0.5L6.5 5L0.5 9.5Z" fill="#808080"/></svg>
<div class="tx" style="left:643.5px;top:829.64px;font-size:12px;color:#c8c8c8;letter-spacing:0.1px;font-weight:normal;">Pose</div>
<div class="tx" style="left:752.7px;top:829.64px;font-size:12px;color:#c8c8c8;letter-spacing:0.1px;font-weight:normal;">16</div>
<div class="tx" style="left:816.5px;top:829.64px;font-size:12px;color:#c8c8c8;letter-spacing:0.1px;font-weight:normal;">0.105</div>
<div class="tx" style="left:881.4px;top:829.81px;font-size:11.8px;color:#c8c8c8;letter-spacing:0.2px;font-weight:normal;">24.5, 14.8, 11.1, 0.3, -0.1, 0.1, -18.9, -22.6, 10.6, 0.5, -0.2, 0.1</div>
<svg style="left:628px;top:847.1px;" width="7" height="10" viewBox="0 0 7 10"><path d="M0.5 0.5L6.5 5L0.5 9.5Z" fill="#808080"/></svg>
<div class="tx" style="left:643.5px;top:846.44px;font-size:12px;color:#c8c8c8;letter-spacing:0.1px;font-weight:normal;">[Stats]</div>
<div class="a" style="left:3px;top:1018px;width:1526px;height:5px;background:#151515;"></div>
<div class="a" style="left:4px;top:1023px;width:1522px;height:32px;background:#242424;"></div>
<div class="a" style="left:135px;top:1023px;width:2px;height:32px;background:#151515;"></div>
<div class="a" style="left:238px;top:1023px;width:2px;height:32px;background:#151515;"></div>
<div class="a" style="left:1262px;top:1023px;width:2px;height:32px;background:#151515;"></div>
<div class="a" style="left:1362px;top:1023px;width:2px;height:32px;background:#151515;"></div>
<svg style="left:13px;top:1031px;" width="18" height="17" viewBox="0 0 18 17"><path d="M1 0.5H6.5L8.5 3H1Z" fill="#7d7d7d"/><path d="M1 4H15.5V14.5H1Z" fill="#c4c4c4"/><circle cx="12.4" cy="10.5" r="5" fill="#242424"/><circle cx="12.4" cy="10.5" r="3.3" fill="none" stroke="#c4c4c4" stroke-width="1.4"/><path d="M10 13L7.6 16" stroke="#c4c4c4" stroke-width="1.5"/></svg>
<div class="tx" style="left:34.4px;top:1033.30px;font-size:13px;color:#c8c8c8;letter-spacing:-0.15px;font-weight:normal;">Content Drawer</div>
<svg style="left:147px;top:1031px;" width="14" height="16" viewBox="0 0 14 16"><path d="M0.5 2H13.5V15.5H0.5Z" fill="#c0c0c0"/><path d="M3 0.5V3.5M6 0.5V3.5M9 0.5V3.5M11.5 0.5V3.5" stroke="#c0c0c0" stroke-width="1"/><path d="M3 7L6 9L3 11M7 12H10" fill="none" stroke="#242424" stroke-width="1.3"/></svg>
<div class="tx" style="left:166.4px;top:1033.30px;font-size:13px;color:#c8c8c8;letter-spacing:-0.25px;font-weight:normal;">Output Log</div>
<svg style="left:253px;top:1032px;" width="17" height="14" viewBox="0 0 17 14"><rect x="0.7" y="0.7" width="15.6" height="12.6" fill="none" stroke="#c0c0c0" stroke-width="1.4"/><path d="M0.7 3H16.3" stroke="#c0c0c0" stroke-width="1"/><path d="M3.5 5.5L6.5 8L3.5 10.5M8 10.5H12" fill="none" stroke="#c0c0c0" stroke-width="1.3"/></svg>
<div class="tx" style="left:274.2px;top:1033.30px;font-size:13px;color:#c8c8c8;letter-spacing:-0.2px;font-weight:normal;">Cmd</div>
<svg style="left:307px;top:1036px;" width="10" height="6" viewBox="0 0 10 6"><path d="M1 1L5 5L9 1" fill="none" stroke="#c8c8c8" stroke-width="1.5"/></svg>
<div class="a" style="left:330px;top:1029px;width:299px;height:21px;background:#0f0f0f;border:1px solid #2a2a2a;border-radius:4px"></div>
<div class="tx" style="left:339.3px;top:1032.68px;font-size:11.6px;color:#5a5a5a;letter-spacing:0px;font-weight:normal;font-family:'Liberation Mono',monospace;">Enter Console Command</div>
<svg style="left:1275px;top:1031px;" width="18" height="16" viewBox="0 0 18 16"><path d="M0.7 1H10.5L13.3 3.8V14.3H0.7Z" fill="#8f8f8f"/><rect x="2.5" y="1" width="7.5" height="5" fill="#cfcfcf"/><rect x="7.6" y="2" width="1.4" height="3" fill="#333"/><rect x="2.5" y="9" width="5" height="5.3" fill="#cfcfcf"/><path d="M7.3 10.3L10.5 13.6L16.6 7.6" fill="none" stroke="#242424" stroke-width="4.2"/><path d="M7.3 10.3L10.5 13.6L16.6 7.6" fill="none" stroke="#d8d8d8" stroke-width="2.2"/></svg>
<div class="tx" style="left:1297.2px;top:1033.30px;font-size:13px;color:#c8c8c8;letter-spacing:-0.2px;font-weight:normal;">All Saved</div>
<svg style="left:1378px;top:1031px;" width="16" height="16" viewBox="0 0 16 16"><circle cx="4" cy="3.1" r="2.2" fill="#c8c8c8"/><circle cx="12" cy="3.1" r="2.2" fill="#c8c8c8"/><circle cx="4" cy="13" r="2.2" fill="#c8c8c8"/><path d="M4 3V13M12 3.5Q12 8.2 4 8.6" fill="none" stroke="#c8c8c8" stroke-width="1.3"/></svg>
<div class="tx" style="left:1399.5px;top:1033.30px;font-size:13px;color:#c8c8c8;letter-spacing:-0.2px;font-weight:normal;">Revision Control</div>
<svg style="left:1497px;top:1036px;" width="10" height="6" viewBox="0 0 10 6"><path d="M1 1L5 5L9 1" fill="none" stroke="#c8c8c8" stroke-width="1.5"/></svg>
</body></html>
